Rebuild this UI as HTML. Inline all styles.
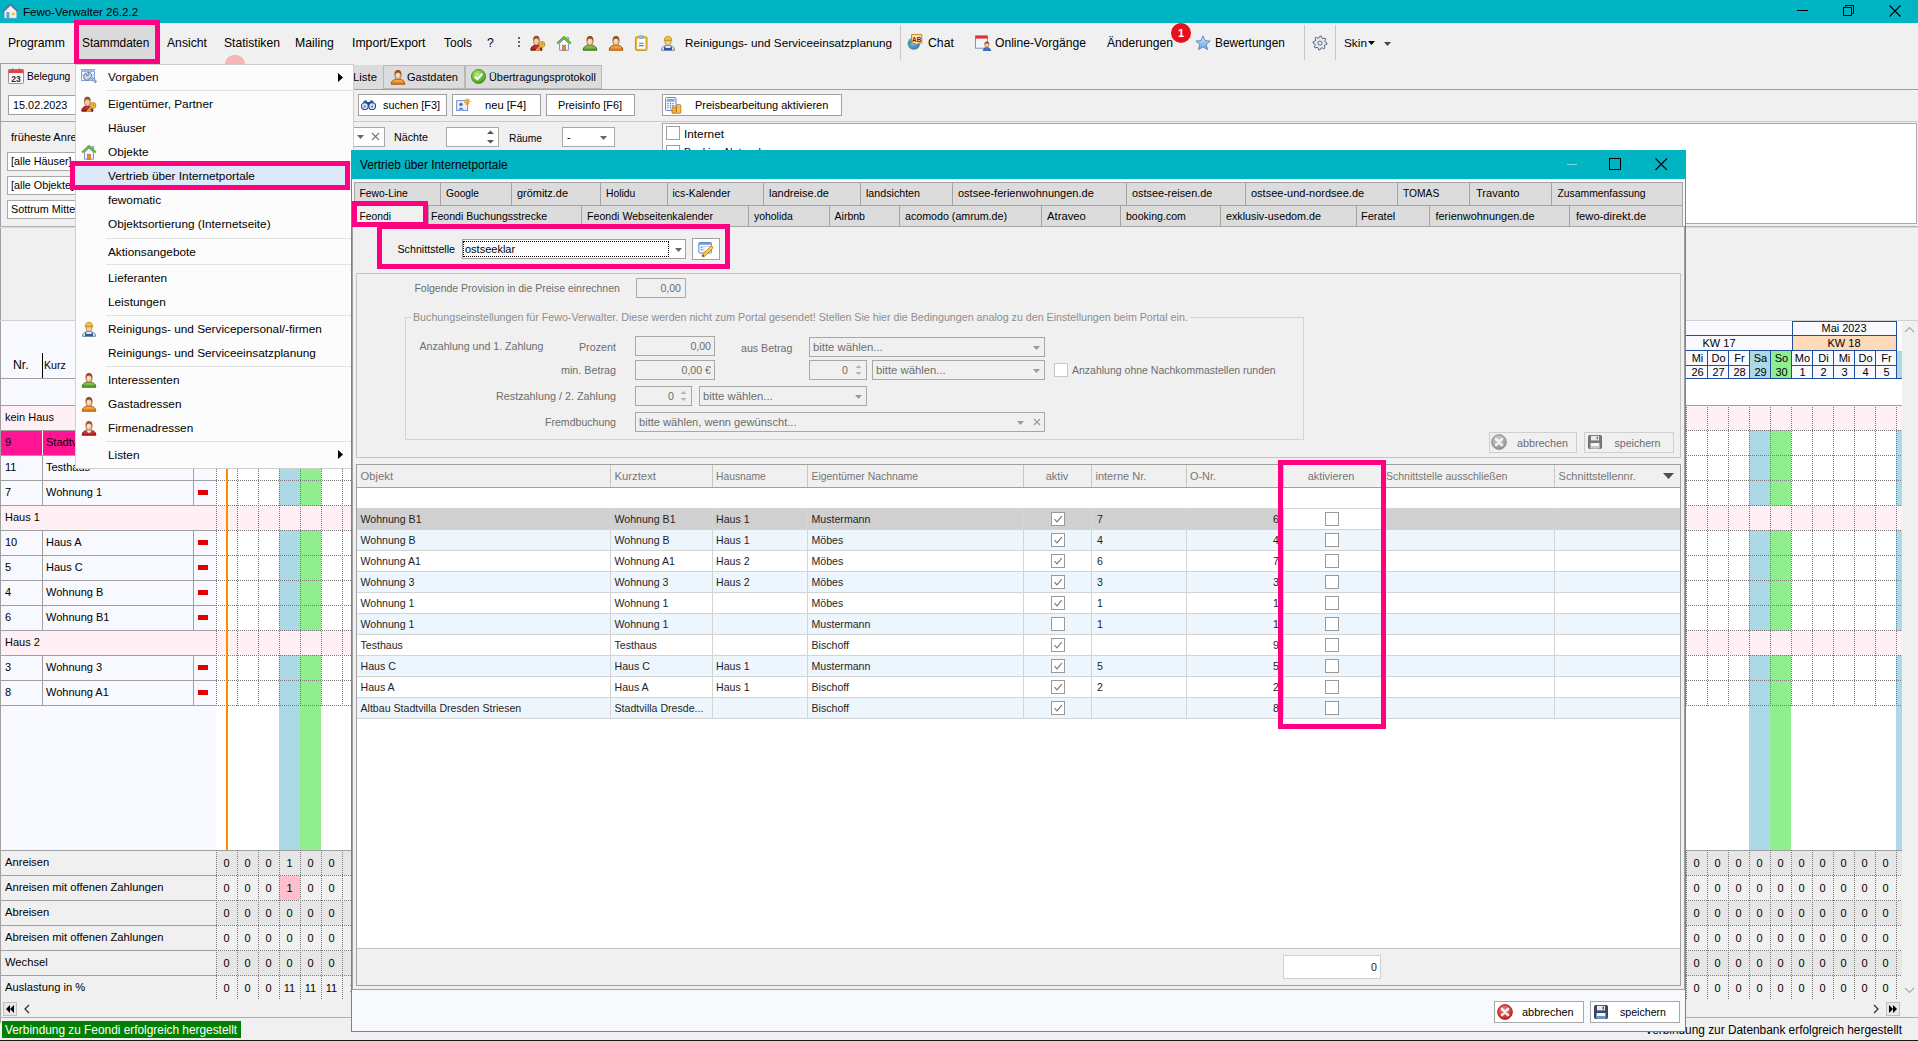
<!DOCTYPE html>
<html><head><meta charset="utf-8"><title>Fewo-Verwalter</title>
<style>
html,body{margin:0;padding:0;}
body{width:1918px;height:1041px;overflow:hidden;position:relative;background:#f0f0f0;font-family:"Liberation Sans",sans-serif;}
body>div,body>svg{position:absolute;}
</style></head><body>
<div style="left:0px;top:0px;width:1918px;height:1041px;background:#f0f0f0;"></div>
<div style="left:0px;top:0px;width:1918px;height:23px;background:#00b4c3;"></div>
<svg style="left:2px;top:3px" width="17" height="16" viewBox="0 0 17 16"><path d="M2.6 8 L8.5 2.6 L14.4 8 V15 H2.6Z" fill="#f2f2f2" stroke="#c0c0c0" stroke-width="0.6"/><path d="M0.8 8.6 L8.5 1.4 L16.2 8.6" fill="none" stroke="#5a6ea0" stroke-width="1.8" stroke-linejoin="round"/><rect x="4.4" y="9" width="3" height="6" fill="#6a9ad8"/><rect x="9.8" y="9.6" width="2.8" height="2.6" fill="#f0c030"/></svg>
<div style="top:4px;font-size:11.5px;line-height:16px;color:#000;white-space:nowrap;left:23px;">Fewo-Verwalter 26.2.2</div>
<div style="left:1797px;top:10px;width:11px;height:1px;background:#000;"></div>
<svg style="left:1843px;top:5px" width="12" height="12" viewBox="0 0 12 12"><rect x="0.5" y="2.5" width="8" height="8" fill="none" stroke="#000"/><path d="M2.5 2.5 V0.5 H10.5 V8.5 H8.5" fill="none" stroke="#000"/></svg>
<svg style="left:1889px;top:5px" width="12" height="12" viewBox="0 0 12 12"><path d="M0.5 0.5 L11.5 11.5 M11.5 0.5 L0.5 11.5" stroke="#000" stroke-width="1.1"/></svg>
<div style="left:79px;top:25px;width:76px;height:34px;background:#dadada;"></div>
<div style="top:35px;font-size:12.1875px;line-height:16px;color:#000;white-space:nowrap;left:8px;">Programm</div>
<div style="top:35px;font-size:11.875px;line-height:16px;color:#000;white-space:nowrap;left:82px;">Stammdaten</div>
<div style="top:35px;font-size:12.1875px;line-height:16px;color:#000;white-space:nowrap;left:167px;">Ansicht</div>
<div style="top:35px;font-size:12.125px;line-height:16px;color:#000;white-space:nowrap;left:224px;">Statistiken</div>
<div style="top:35px;font-size:12.25px;line-height:16px;color:#000;white-space:nowrap;left:295px;">Mailing</div>
<div style="top:35px;font-size:12.25px;line-height:16px;color:#000;white-space:nowrap;left:352px;">Import/Export</div>
<div style="top:35px;font-size:12.0px;line-height:16px;color:#000;white-space:nowrap;left:444px;">Tools</div>
<div style="top:35px;font-size:12.25px;line-height:16px;color:#000;white-space:nowrap;left:487px;">?</div>
<div style="left:518px;top:37px;width:2px;height:2px;background:#666"></div><div style="left:518px;top:41px;width:2px;height:2px;background:#666"></div><div style="left:518px;top:45px;width:2px;height:2px;background:#666"></div>
<svg style="left:530px;top:35px" width="16" height="16" viewBox="0 0 16 16"><defs><linearGradient id="g1" x1="0" y1="0" x2="0" y2="1"><stop offset="0" stop-color="#d84040"/><stop offset="1" stop-color="#a01818"/></linearGradient></defs><path d="M0.8 15.2 C0.8 11.6 3 10.2 6.4 10.2 C9.8 10.2 12 11.6 12 15.2 Z" fill="url(#g1)" stroke="#6a0c0c" stroke-width="0.9"/><ellipse cx="6.4" cy="6.4" rx="2.9" ry="3.7" fill="#f3c9a0" stroke="#a0602e" stroke-width="0.7"/><path d="M3.2 6.2 C2.8 2.4 4.4 0.8 6.4 0.8 C8.4 0.8 10 2.4 9.6 6.2 C9 4.4 8.2 3.2 6.4 3.2 C4.6 3.2 3.8 4.4 3.2 6.2Z" fill="#8e4e22"/><circle cx="12" cy="9.4" r="2.9" fill="#f2c050" stroke="#b07818" stroke-width="0.8"/><circle cx="12.3" cy="9.1" r="0.9" fill="#b07818"/><path d="M10.2 11.4 L6.6 15.2 M8 13.8 L9.2 15" stroke="#e0a438" stroke-width="1.9" stroke-linecap="round"/></svg>
<svg style="left:556px;top:35px" width="16" height="16" viewBox="0 0 16 16"><path d="M3.6 8.2 V15.2 H12.4 V8.2 L8 4Z" fill="#f6f9ff" stroke="#6a7ed0" stroke-width="0.9"/><path d="M11 4.6 V2.4 H12.6 V6.2" fill="#f6f9ff" stroke="#6a7ed0" stroke-width="0.8"/><path d="M1.2 8.6 L8 2 L14.8 8.6" fill="none" stroke="#62b030" stroke-width="2.1" stroke-linejoin="round"/><rect x="6.5" y="10.2" width="3" height="5" fill="#e89030" stroke="#b06010" stroke-width="0.6"/></svg>
<svg style="left:582px;top:35px" width="16" height="16" viewBox="0 0 16 16"><defs><linearGradient id="g2" x1="0" y1="0" x2="0" y2="1"><stop offset="0" stop-color="#9ad860"/><stop offset="1" stop-color="#4a9a20"/></linearGradient><radialGradient id="g2f" cx="0.45" cy="0.45" r="0.6"><stop offset="0" stop-color="#fff2e0"/><stop offset="1" stop-color="#e0a070"/></radialGradient></defs><path d="M1.2 15.2 C1.2 11.6 4 10.2 8 10.2 C12 10.2 14.8 11.6 14.8 15.2 Z" fill="url(#g2)" stroke="#2f6a10" stroke-width="0.9"/><ellipse cx="8" cy="6.6" rx="3.1" ry="3.9" fill="url(#g2f)" stroke="#a0602e" stroke-width="0.7"/><path d="M4.6 6.4 C4.2 2.6 5.8 1 8 1 C10.2 1 11.8 2.6 11.4 6.4 C10.8 4.6 10 3.4 8 3.4 C6 3.4 5.2 4.6 4.6 6.4Z" fill="#8e4e22"/></svg>
<svg style="left:608px;top:35px" width="16" height="16" viewBox="0 0 16 16"><defs><linearGradient id="g3" x1="0" y1="0" x2="0" y2="1"><stop offset="0" stop-color="#ffb850"/><stop offset="1" stop-color="#e07810"/></linearGradient><radialGradient id="g3f" cx="0.45" cy="0.45" r="0.6"><stop offset="0" stop-color="#fff2e0"/><stop offset="1" stop-color="#e0a070"/></radialGradient></defs><path d="M1.2 15.2 C1.2 11.6 4 10.2 8 10.2 C12 10.2 14.8 11.6 14.8 15.2 Z" fill="url(#g3)" stroke="#a05008" stroke-width="0.9"/><ellipse cx="8" cy="6.6" rx="3.1" ry="3.9" fill="url(#g3f)" stroke="#a0602e" stroke-width="0.7"/><path d="M4.6 6.4 C4.2 2.6 5.8 1 8 1 C10.2 1 11.8 2.6 11.4 6.4 C10.8 4.6 10 3.4 8 3.4 C6 3.4 5.2 4.6 4.6 6.4Z" fill="#8e4e22"/></svg>
<svg style="left:634px;top:35px" width="16" height="16" viewBox="0 0 16 16"><rect x="1.5" y="1.8" width="11.5" height="13.6" rx="1.2" fill="#f2c030" stroke="#b88a10" stroke-width="0.9"/><rect x="3.2" y="3.6" width="8.1" height="10.2" fill="#fbfdff"/><path d="M5 8.2 H9.6 M5 10.6 H9.6" stroke="#3e78d0" stroke-width="1.1"/><rect x="5" y="0.6" width="4.5" height="2.8" rx="0.8" fill="#8ac0f0" stroke="#5a90c8" stroke-width="0.5"/></svg>
<svg style="left:660px;top:35px" width="16" height="16" viewBox="0 0 16 16"><path d="M1.5 15.3 C1.5 11.8 4 10.4 8 10.4 C12 10.4 14.5 11.8 14.5 15.3 Z" fill="#dfe6f0" stroke="#56688a" stroke-width="0.8"/><path d="M4 15.3 V11.4 H5.4 V13 H10.6 V11.4 H12 V15.3Z" fill="#2c58b0"/><ellipse cx="8" cy="6.8" rx="3" ry="3.6" fill="#f4cfa4" stroke="#a0602e" stroke-width="0.6"/><path d="M4.3 5.6 C4.3 2.2 6 1.2 8 1.2 C10 1.2 11.7 2.2 11.7 5.6 Z" fill="#f0c040" stroke="#a07a10" stroke-width="0.6"/><rect x="4" y="4.8" width="8" height="1.4" fill="#c89a20"/></svg>
<div style="top:35px;font-size:11.75px;line-height:16px;color:#000;white-space:nowrap;left:685px;">Reinigungs- und Serviceeinsatzplanung</div>
<div style="left:900px;top:25px;width:1px;height:35px;background:#c8c8c8;"></div>
<svg style="left:907px;top:34px" width="16" height="16" viewBox="0 0 16 16"><defs><radialGradient id="g5" cx="0.4" cy="0.4" r="0.7"><stop offset="0" stop-color="#7ac8f8"/><stop offset="1" stop-color="#2a68b8"/></radialGradient></defs><circle cx="6.8" cy="9.6" r="6.2" fill="url(#g5)"/><path d="M1.4 7.6 Q3.4 6 4.6 8.2 Q3.8 11 1.4 11.2Z M7.5 13.2 Q9.5 12 10.8 14.4 Q8.5 16 7.5 13.2Z" fill="#5aa030"/><path d="M4.6 0.6 H14.8 V9.2 H11 L9.6 11 L8.2 9.2 H4.6Z" fill="#fde6b0" stroke="#d08018" stroke-width="1"/><text x="9.7" y="7.6" font-size="6.4" font-weight="bold" text-anchor="middle" fill="#7a1a0a" font-family="Liberation Sans">AB</text></svg>
<div style="top:35px;font-size:12.25px;line-height:16px;color:#000;white-space:nowrap;left:928px;">Chat</div>
<svg style="left:975px;top:35px" width="16" height="16" viewBox="0 0 16 16"><rect x="0.5" y="0.8" width="12" height="12.4" fill="#f4f6fa" stroke="#7a8ca8" stroke-width="0.9"/><rect x="0.5" y="0.8" width="12" height="2.8" fill="#e03030"/><path d="M8.2 16 C8.2 13.4 9.6 12.6 11.8 12.6 C14 12.6 15.6 13.4 15.6 16Z" fill="#3a7ad0" stroke="#1e4a98" stroke-width="0.6"/><ellipse cx="11.8" cy="9.6" rx="2.2" ry="2.6" fill="#f6d0a0" stroke="#8a4a1a" stroke-width="0.5"/><path d="M9.6 9.6 C9.4 7 10.6 6.4 11.8 6.4 C13 6.4 14.2 7 14 9.6 C13.4 8.2 10.2 8.2 9.6 9.6Z" fill="#8a4a1a"/></svg>
<div style="top:35px;font-size:12.125px;line-height:16px;color:#000;white-space:nowrap;left:995px;">Online-Vorgänge</div>
<div style="top:35px;font-size:12.125px;line-height:16px;color:#000;white-space:nowrap;left:1107px;">Änderungen</div>
<div style="left:1171px;top:23px;width:20px;height:20px;border-radius:10px;background:#e8101a;color:#fff;font-size:11px;font-weight:bold;line-height:20px;text-align:center">1</div>
<svg style="left:1195px;top:35px" width="16" height="16" viewBox="0 0 16 16"><defs><linearGradient id="g6" x1="0" y1="0" x2="0" y2="1"><stop offset="0" stop-color="#cfe6fc"/><stop offset="1" stop-color="#6aa2e0"/></linearGradient></defs><path d="M8 0.9 L10.1 5.6 L15.2 6.1 L11.3 9.5 L12.5 14.6 L8 11.9 L3.5 14.6 L4.7 9.5 L0.8 6.1 L5.9 5.6Z" fill="url(#g6)" stroke="#4a7ab8" stroke-width="0.8" stroke-linejoin="round"/></svg>
<div style="top:35px;font-size:11.875px;line-height:16px;color:#000;white-space:nowrap;left:1215px;">Bewertungen</div>
<div style="left:1304px;top:25px;width:1px;height:35px;background:#c8c8c8;"></div>
<svg style="left:1312px;top:35px" width="16" height="16" viewBox="0 0 16 16"><polygon points="8.00,1.00 9.37,1.13 9.99,3.20 10.89,3.68 12.95,3.05 13.82,4.11 12.80,6.01 13.10,6.99 15.00,8.00 14.87,9.37 12.80,9.99 12.32,10.89 12.95,12.95 11.89,13.82 9.99,12.80 9.01,13.10 8.00,15.00 6.63,14.87 6.01,12.80 5.11,12.32 3.05,12.95 2.18,11.89 3.20,9.99 2.90,9.01 1.00,8.00 1.13,6.63 3.20,6.01 3.68,5.11 3.05,3.05 4.11,2.18 6.01,3.20 6.99,2.90" fill="#e4e8f0" stroke="#5a6888" stroke-width="1"/><circle cx="8" cy="8" r="2" fill="#f4f6fa" stroke="#5a6888" stroke-width="1"/></svg>
<div style="left:1335px;top:25px;width:1px;height:35px;background:#c8c8c8;"></div>
<div style="top:35px;font-size:11.8125px;line-height:16px;color:#000;white-space:nowrap;left:1344px;">Skin</div>
<svg style="left:1368px;top:41px" width="7" height="4"><path d="M0 0 H7 L3.5 4Z" fill="#000"/></svg>
<svg style="left:1384px;top:42px" width="7" height="4"><path d="M0 0 H7 L3.5 4Z" fill="#444"/></svg>
<div style="left:0px;top:63px;width:75px;height:1px;background:#a0a0a0;"></div>
<div style="left:0px;top:63px;width:1px;height:960px;background:#a0a0a0;"></div>
<div style="left:351px;top:89px;width:1567px;height:1px;background:#a0a0a0;"></div>
<div style="left:351px;top:65px;width:32px;height:24px;background:#dcdcdc;"></div>
<div style="left:383px;top:65px;width:82px;height:24px;background:#dcdcdc;border:1px solid #b8b8b8;box-sizing:border-box;"></div>
<div style="left:465px;top:65px;width:137px;height:24px;background:#dcdcdc;border:1px solid #b8b8b8;box-sizing:border-box;"></div>
<div style="top:69px;font-size:11.375px;line-height:16px;color:#000;white-space:nowrap;left:353px;">Liste</div>
<svg style="left:390px;top:69px" width="16" height="16" viewBox="0 0 16 16"><defs><linearGradient id="g7" x1="0" y1="0" x2="0" y2="1"><stop offset="0" stop-color="#ffb850"/><stop offset="1" stop-color="#e07810"/></linearGradient><radialGradient id="g7f" cx="0.45" cy="0.45" r="0.6"><stop offset="0" stop-color="#fff2e0"/><stop offset="1" stop-color="#e0a070"/></radialGradient></defs><path d="M1.2 15.2 C1.2 11.6 4 10.2 8 10.2 C12 10.2 14.8 11.6 14.8 15.2 Z" fill="url(#g7)" stroke="#a05008" stroke-width="0.9"/><ellipse cx="8" cy="6.6" rx="3.1" ry="3.9" fill="url(#g7f)" stroke="#a0602e" stroke-width="0.7"/><path d="M4.6 6.4 C4.2 2.6 5.8 1 8 1 C10.2 1 11.8 2.6 11.4 6.4 C10.8 4.6 10 3.4 8 3.4 C6 3.4 5.2 4.6 4.6 6.4Z" fill="#8e4e22"/></svg>
<div style="top:69px;font-size:11.0625px;line-height:16px;color:#000;white-space:nowrap;left:407px;">Gastdaten</div>
<svg style="left:471px;top:69px" width="15" height="15" viewBox="0 0 15 15"><defs><radialGradient id="g8" cx="0.4" cy="0.35" r="0.7"><stop offset="0" stop-color="#b8f080"/><stop offset="1" stop-color="#3a9a10"/></radialGradient></defs><circle cx="7.5" cy="7.5" r="7" fill="url(#g8)" stroke="#3a8010" stroke-width="0.8"/><path d="M3.8 7.6 L6.4 10.2 L11.4 4.6" fill="none" stroke="#fff" stroke-width="1.9"/></svg>
<div style="top:69px;font-size:10.875px;line-height:16px;color:#000;white-space:nowrap;left:489px;">Übertragungsprotokoll</div>
<svg style="left:8px;top:68px" width="16" height="16" viewBox="0 0 16 16"><rect x="0.5" y="1.5" width="15" height="14" rx="0.8" fill="#fafafa" stroke="#8a8a8a" stroke-width="0.9"/><rect x="0.5" y="1.5" width="15" height="3.6" fill="#e04848"/><path d="M4.5 0.4 V3 M11.5 0.4 V3" stroke="#707070" stroke-width="1"/><text x="8" y="14" font-size="8.6" font-weight="bold" text-anchor="middle" fill="#2a2a2a" font-family="Liberation Sans">23</text></svg>
<div style="top:69px;font-size:10.25px;line-height:16px;color:#000;white-space:nowrap;left:27px;">Belegung</div>
<div style="left:8px;top:95px;width:80px;height:20px;background:#fff;border:1px solid #a0a0a0;box-sizing:border-box;"></div>
<div style="top:97px;font-size:10.875px;line-height:16px;color:#000;white-space:nowrap;left:13px;">15.02.2023</div>
<div style="left:0px;top:121px;width:75px;height:1px;background:#a8a8a8;"></div>
<div style="left:358px;top:94px;width:89px;height:22px;background:#fff;border:1px solid #a0a0a0;box-sizing:border-box;"></div>
<div style="top:97px;font-size:10.9375px;line-height:16px;color:#000;white-space:nowrap;left:383px;">suchen [F3]</div>
<div style="left:452px;top:94px;width:89px;height:22px;background:#fff;border:1px solid #a0a0a0;box-sizing:border-box;"></div>
<div style="top:97px;font-size:11.1875px;line-height:16px;color:#000;white-space:nowrap;left:485px;">neu [F4]</div>
<div style="left:546px;top:94px;width:89px;height:22px;background:#fff;border:1px solid #a0a0a0;box-sizing:border-box;"></div>
<div style="top:97px;font-size:10.875px;line-height:16px;color:#000;white-space:nowrap;left:558px;">Preisinfo [F6]</div>
<div style="left:662px;top:94px;width:180px;height:22px;background:#fff;border:1px solid #a0a0a0;box-sizing:border-box;"></div>
<div style="top:97px;font-size:11.0px;line-height:16px;color:#000;white-space:nowrap;left:695px;">Preisbearbeitung aktivieren</div>
<svg style="left:361px;top:99px" width="15" height="11" viewBox="0 0 15 11"><path d="M1 7 L3 1.5 H6 V7Z M14 7 L12 1.5 H9 V7Z" fill="#3a5aa0"/><rect x="6" y="3" width="3" height="4" fill="#283e78"/><circle cx="3.8" cy="7.2" r="3.4" fill="#d8e4f4" stroke="#2a4a88" stroke-width="1.1"/><circle cx="11.2" cy="7.2" r="3.4" fill="#d8e4f4" stroke="#2a4a88" stroke-width="1.1"/><circle cx="3.8" cy="7.4" r="1" fill="#3a6ac8"/><circle cx="11.2" cy="7.4" r="1" fill="#3a6ac8"/></svg>
<svg style="left:456px;top:98px" width="15" height="13" viewBox="0 0 15 13"><rect x="0.6" y="2.6" width="11" height="10" fill="#e6eefa" stroke="#6a8ad0" stroke-width="0.9"/><circle cx="5" cy="6.4" r="1.7" fill="#4a6aa0"/><path d="M2.2 11.6 Q5 8 7.8 11.6Z" fill="#4a6aa0"/><path d="M11 0.2 L11.6 2 L13.4 1.2 L12.6 3 L14.2 3.8 L12.4 4.4 L13 6.2 L11.2 5.2 L10.2 6.8 L10 4.8 L8.2 4.4 L9.8 3.4 L9 1.6 L10.8 2.2Z" fill="#f8b020" stroke="#e07010" stroke-width="0.4"/></svg>
<svg style="left:665px;top:97px" width="17" height="17" viewBox="0 0 17 17"><rect x="0.5" y="0.5" width="10.5" height="13" rx="1" fill="#eef4fc" stroke="#5a7ac0" stroke-width="0.9"/><rect x="2" y="2" width="7.5" height="2.6" fill="#7aa8e0"/><path d="M2.5 6.5 h1 M5 6.5 h1 M7.5 6.5 h1 M2.5 8.6 h1 M5 8.6 h1 M7.5 8.6 h1 M2.5 10.7 h1 M5 10.7 h1" stroke="#4a6ab0" stroke-width="1.1"/><path d="M7.5 8.6 h1" stroke="#e03030" stroke-width="1.1"/><rect x="7" y="10" width="4.4" height="6.4" rx="1.2" fill="#f0b040" stroke="#a86010" stroke-width="0.7"/><rect x="11.4" y="7.6" width="4.4" height="8.8" rx="1.2" fill="#f6c050" stroke="#a86010" stroke-width="0.7"/></svg>
<div style="left:351px;top:121px;width:1567px;height:1px;background:#c8c8c8;"></div>
<div style="left:351px;top:127px;width:34px;height:20px;background:#fff;border:1px solid #a8a8a8;box-sizing:border-box;"></div>
<svg style="left:357px;top:135px" width="7" height="4"><path d="M0 0 H7 L3.5 4Z" fill="#666"/></svg>
<svg style="left:371px;top:132px" width="9" height="9" viewBox="0 0 9 9"><path d="M1 1 L8 8 M8 1 L1 8" stroke="#777" stroke-width="1.1"/></svg>
<div style="top:129px;font-size:10.75px;line-height:16px;color:#000;white-space:nowrap;left:394px;">Nächte</div>
<div style="left:446px;top:127px;width:53px;height:20px;background:#fff;border:1px solid #a8a8a8;box-sizing:border-box;"></div>
<svg style="left:487px;top:130px" width="7" height="14"><path d="M0 4 L3.5 0.5 L7 4Z M0 10 L3.5 13.5 L7 10Z" fill="#555"/></svg>
<div style="top:131px;font-size:10.25px;line-height:16px;color:#000;white-space:nowrap;left:509px;">Räume</div>
<div style="left:562px;top:127px;width:53px;height:20px;background:#fff;border:1px solid #a8a8a8;box-sizing:border-box;"></div>
<div style="top:129px;font-size:11px;line-height:16px;color:#000;white-space:nowrap;left:567px;">-</div>
<svg style="left:600px;top:136px" width="7" height="4"><path d="M0 0 H7 L3.5 4Z" fill="#666"/></svg>
<div style="left:662px;top:123px;width:1255px;height:101px;background:#fff;border:1px solid #a8a8a8;box-sizing:border-box;"></div>
<div style="left:666px;top:126px;width:14px;height:14px;background:#fff;border:1px solid #a0a0a0;box-sizing:border-box;"></div>
<div style="top:126px;font-size:11.8125px;line-height:16px;color:#000;white-space:nowrap;left:684px;">Internet</div>
<div style="left:666px;top:145px;width:14px;height:14px;background:#fff;border:1px solid #a0a0a0;box-sizing:border-box;"></div>
<div style="top:144px;font-size:10.5625px;line-height:16px;color:#000;white-space:nowrap;left:684px;">Booking Network</div>
<div style="left:0px;top:226px;width:1918px;height:1px;background:#b4b4b4;"></div>
<div style="left:0px;top:227px;width:1918px;height:1px;background:#d8d8d8;"></div>
<div style="top:129px;font-size:11.0625px;line-height:16px;color:#000;white-space:nowrap;left:11px;">früheste Anreise</div>
<div style="left:7px;top:152px;width:80px;height:19px;background:#fff;border:1px solid #a8a8a8;box-sizing:border-box;"></div>
<div style="top:153px;font-size:10.8px;line-height:16px;color:#000;white-space:nowrap;left:11px;">[alle Häuser]</div>
<div style="left:7px;top:176px;width:80px;height:19px;background:#fff;border:1px solid #a8a8a8;box-sizing:border-box;"></div>
<div style="top:177px;font-size:10.8px;line-height:16px;color:#000;white-space:nowrap;left:11px;">[alle Objekte]</div>
<div style="left:7px;top:200px;width:80px;height:19px;background:#fff;border:1px solid #a8a8a8;box-sizing:border-box;"></div>
<div style="top:201px;font-size:10.8px;line-height:16px;color:#000;white-space:nowrap;left:11px;">Sottrum Mitte</div>
<div style="left:0px;top:320px;width:1918px;height:1px;background:#d0d0d0;"></div>
<div style="left:1px;top:321px;width:1901px;height:84px;background:#f8faff;"></div>
<div style="left:216px;top:379px;width:1686px;height:26px;background:#fff;"></div>
<div style="left:0px;top:321px;width:216px;height:84px;background:#f7f9fe;"></div>
<div style="left:0px;top:378px;width:216px;height:1px;background:#a0a0a0;"></div>
<div style="top:357px;font-size:12.25px;line-height:16px;color:#000;white-space:nowrap;left:13px;">Nr.</div>
<div style="top:357px;font-size:10.6875px;line-height:16px;color:#000;white-space:nowrap;left:44px;">Kurz</div>
<div style="left:42px;top:353px;width:1px;height:25px;background:#000;"></div>
<div style="left:1686px;top:335px;width:211px;height:1px;background:#1f4e9e;"></div>
<div style="left:1686px;top:350px;width:211px;height:1px;background:#1f4e9e;"></div>
<div style="left:1686px;top:365px;width:211px;height:1px;background:#1f4e9e;"></div>
<div style="left:1686px;top:378px;width:216px;height:1px;background:#1f4e9e;"></div>
<div style="left:1792px;top:321px;width:105px;height:1px;background:#1f4e9e;"></div>
<div style="left:1792px;top:321px;width:1px;height:29px;background:#1f4e9e;"></div>
<div style="left:1896px;top:321px;width:1px;height:57px;background:#1f4e9e;"></div>
<div style="left:1793px;top:336px;width:103px;height:14px;background:#ffdab9;"></div>
<div style="top:320px;font-size:10.9375px;line-height:16px;color:#000;white-space:nowrap;left:1644px;width:400px;text-align:center;">Mai 2023</div>
<div style="top:335px;font-size:11px;line-height:16px;color:#000;white-space:nowrap;left:1519px;width:400px;text-align:center;">KW 17</div>
<div style="top:335px;font-size:11px;line-height:16px;color:#000;white-space:nowrap;left:1644px;width:400px;text-align:center;">KW 18</div>
<div style="left:1707px;top:350px;width:1px;height:28px;background:#1f4e9e;"></div>
<div style="top:350px;font-size:11px;line-height:16px;color:#000;white-space:nowrap;left:1497.5px;width:400px;text-align:center;">Mi</div>
<div style="top:364px;font-size:11px;line-height:16px;color:#000;white-space:nowrap;left:1497.5px;width:400px;text-align:center;">26</div>
<div style="left:1728px;top:350px;width:1px;height:28px;background:#1f4e9e;"></div>
<div style="top:350px;font-size:11px;line-height:16px;color:#000;white-space:nowrap;left:1518.5px;width:400px;text-align:center;">Do</div>
<div style="top:364px;font-size:11px;line-height:16px;color:#000;white-space:nowrap;left:1518.5px;width:400px;text-align:center;">27</div>
<div style="left:1749px;top:350px;width:1px;height:28px;background:#1f4e9e;"></div>
<div style="top:350px;font-size:11px;line-height:16px;color:#000;white-space:nowrap;left:1539.5px;width:400px;text-align:center;">Fr</div>
<div style="top:364px;font-size:11px;line-height:16px;color:#000;white-space:nowrap;left:1539.5px;width:400px;text-align:center;">28</div>
<div style="left:1750px;top:351px;width:21px;height:27px;background:#add8e6;"></div>
<div style="left:1770px;top:350px;width:1px;height:28px;background:#1f4e9e;"></div>
<div style="top:350px;font-size:11px;line-height:16px;color:#000;white-space:nowrap;left:1560.5px;width:400px;text-align:center;">Sa</div>
<div style="top:364px;font-size:11px;line-height:16px;color:#000;white-space:nowrap;left:1560.5px;width:400px;text-align:center;">29</div>
<div style="left:1771px;top:351px;width:21px;height:27px;background:#90ee90;"></div>
<div style="left:1791px;top:350px;width:1px;height:28px;background:#1f4e9e;"></div>
<div style="top:350px;font-size:11px;line-height:16px;color:#000;white-space:nowrap;left:1581.5px;width:400px;text-align:center;">So</div>
<div style="top:364px;font-size:11px;line-height:16px;color:#000;white-space:nowrap;left:1581.5px;width:400px;text-align:center;">30</div>
<div style="left:1812px;top:350px;width:1px;height:28px;background:#1f4e9e;"></div>
<div style="top:350px;font-size:11px;line-height:16px;color:#000;white-space:nowrap;left:1602.5px;width:400px;text-align:center;">Mo</div>
<div style="top:364px;font-size:11px;line-height:16px;color:#000;white-space:nowrap;left:1602.5px;width:400px;text-align:center;">1</div>
<div style="left:1833px;top:350px;width:1px;height:28px;background:#1f4e9e;"></div>
<div style="top:350px;font-size:11px;line-height:16px;color:#000;white-space:nowrap;left:1623.5px;width:400px;text-align:center;">Di</div>
<div style="top:364px;font-size:11px;line-height:16px;color:#000;white-space:nowrap;left:1623.5px;width:400px;text-align:center;">2</div>
<div style="left:1854px;top:350px;width:1px;height:28px;background:#1f4e9e;"></div>
<div style="top:350px;font-size:11px;line-height:16px;color:#000;white-space:nowrap;left:1644.5px;width:400px;text-align:center;">Mi</div>
<div style="top:364px;font-size:11px;line-height:16px;color:#000;white-space:nowrap;left:1644.5px;width:400px;text-align:center;">3</div>
<div style="left:1875px;top:350px;width:1px;height:28px;background:#1f4e9e;"></div>
<div style="top:350px;font-size:11px;line-height:16px;color:#000;white-space:nowrap;left:1665.5px;width:400px;text-align:center;">Do</div>
<div style="top:364px;font-size:11px;line-height:16px;color:#000;white-space:nowrap;left:1665.5px;width:400px;text-align:center;">4</div>
<div style="left:1896px;top:350px;width:1px;height:28px;background:#1f4e9e;"></div>
<div style="top:350px;font-size:11px;line-height:16px;color:#000;white-space:nowrap;left:1686.5px;width:400px;text-align:center;">Fr</div>
<div style="top:364px;font-size:11px;line-height:16px;color:#000;white-space:nowrap;left:1686.5px;width:400px;text-align:center;">5</div>
<div style="left:1897px;top:351px;width:5px;height:27px;background:#add8e6;"></div>
<div style="left:216px;top:405px;width:1686px;height:445px;background:#fff;"></div>
<div style="left:279px;top:405px;width:21px;height:445px;background:#add8e6;"></div>
<div style="left:300px;top:405px;width:21px;height:445px;background:#90ee90;"></div>
<div style="left:426px;top:405px;width:21px;height:445px;background:#add8e6;"></div>
<div style="left:447px;top:405px;width:21px;height:445px;background:#90ee90;"></div>
<div style="left:573px;top:405px;width:21px;height:445px;background:#add8e6;"></div>
<div style="left:594px;top:405px;width:21px;height:445px;background:#90ee90;"></div>
<div style="left:720px;top:405px;width:21px;height:445px;background:#add8e6;"></div>
<div style="left:741px;top:405px;width:21px;height:445px;background:#90ee90;"></div>
<div style="left:867px;top:405px;width:21px;height:445px;background:#add8e6;"></div>
<div style="left:888px;top:405px;width:21px;height:445px;background:#90ee90;"></div>
<div style="left:1014px;top:405px;width:21px;height:445px;background:#add8e6;"></div>
<div style="left:1035px;top:405px;width:21px;height:445px;background:#90ee90;"></div>
<div style="left:1161px;top:405px;width:21px;height:445px;background:#add8e6;"></div>
<div style="left:1182px;top:405px;width:21px;height:445px;background:#90ee90;"></div>
<div style="left:1308px;top:405px;width:21px;height:445px;background:#add8e6;"></div>
<div style="left:1329px;top:405px;width:21px;height:445px;background:#90ee90;"></div>
<div style="left:1455px;top:405px;width:21px;height:445px;background:#add8e6;"></div>
<div style="left:1476px;top:405px;width:21px;height:445px;background:#90ee90;"></div>
<div style="left:1602px;top:405px;width:21px;height:445px;background:#add8e6;"></div>
<div style="left:1623px;top:405px;width:21px;height:445px;background:#90ee90;"></div>
<div style="left:1749px;top:405px;width:21px;height:445px;background:#add8e6;"></div>
<div style="left:1770px;top:405px;width:21px;height:445px;background:#90ee90;"></div>
<div style="left:1896px;top:405px;width:21px;height:445px;background:#add8e6;"></div>
<div style="left:1917px;top:405px;width:21px;height:445px;background:#90ee90;"></div>
<div style="left:0px;top:405px;width:216px;height:445px;background:#f7f9fe;"></div>
<div style="left:0px;top:406px;width:1902px;height:24px;background:#fff0f5;"></div>
<div style="top:409px;font-size:11px;line-height:16px;color:#000;white-space:nowrap;left:5px;">kein Haus</div>
<div style="left:0px;top:430px;width:216px;height:1px;background:#a0a0a0;"></div>
<div style="left:0px;top:431px;width:216px;height:24px;background:#ff1493;"></div>
<div style="left:42px;top:431px;width:1px;height:24px;background:#fff;"></div>
<div style="left:193px;top:430px;width:1px;height:25px;background:#a0a0a0;"></div>
<div style="top:434px;font-size:11px;line-height:16px;color:#000;white-space:nowrap;left:5px;">9</div>
<div style="top:434px;font-size:11px;line-height:16px;color:#000;white-space:nowrap;left:46px;">Stadtvilla</div>
<div style="left:0px;top:455px;width:216px;height:1px;background:#a0a0a0;"></div>
<div style="left:42px;top:455px;width:1px;height:25px;background:#a0a0a0;"></div>
<div style="left:193px;top:455px;width:1px;height:25px;background:#a0a0a0;"></div>
<div style="top:459px;font-size:11px;line-height:16px;color:#000;white-space:nowrap;left:5px;">11</div>
<div style="top:459px;font-size:11px;line-height:16px;color:#000;white-space:nowrap;left:46px;">Testhaus</div>
<svg style="left:195px;top:460px" width="17" height="9"><rect x="0.8" y="0.8" width="15.4" height="7.4" rx="2.5" fill="#fbeaea" stroke="#40a050" stroke-width="1.5"/><ellipse cx="12" cy="3.5" rx="2" ry="1.6" fill="#ff2000"/></svg>
<div style="left:0px;top:480px;width:216px;height:1px;background:#a0a0a0;"></div>
<div style="left:42px;top:480px;width:1px;height:25px;background:#a0a0a0;"></div>
<div style="left:193px;top:480px;width:1px;height:25px;background:#a0a0a0;"></div>
<div style="top:484px;font-size:11px;line-height:16px;color:#000;white-space:nowrap;left:5px;">7</div>
<div style="top:484px;font-size:11px;line-height:16px;color:#000;white-space:nowrap;left:46px;">Wohnung 1</div>
<div style="left:198px;top:490px;width:10px;height:5px;background:#e00000;"></div>
<div style="left:0px;top:505px;width:216px;height:1px;background:#a0a0a0;"></div>
<div style="left:0px;top:506px;width:1902px;height:24px;background:#fff0f5;"></div>
<div style="top:509px;font-size:11px;line-height:16px;color:#000;white-space:nowrap;left:5px;">Haus 1</div>
<div style="left:0px;top:530px;width:216px;height:1px;background:#a0a0a0;"></div>
<div style="left:42px;top:530px;width:1px;height:25px;background:#a0a0a0;"></div>
<div style="left:193px;top:530px;width:1px;height:25px;background:#a0a0a0;"></div>
<div style="top:534px;font-size:11px;line-height:16px;color:#000;white-space:nowrap;left:5px;">10</div>
<div style="top:534px;font-size:11px;line-height:16px;color:#000;white-space:nowrap;left:46px;">Haus A</div>
<div style="left:198px;top:540px;width:10px;height:5px;background:#e00000;"></div>
<div style="left:0px;top:555px;width:216px;height:1px;background:#a0a0a0;"></div>
<div style="left:42px;top:555px;width:1px;height:25px;background:#a0a0a0;"></div>
<div style="left:193px;top:555px;width:1px;height:25px;background:#a0a0a0;"></div>
<div style="top:559px;font-size:11px;line-height:16px;color:#000;white-space:nowrap;left:5px;">5</div>
<div style="top:559px;font-size:11px;line-height:16px;color:#000;white-space:nowrap;left:46px;">Haus C</div>
<div style="left:198px;top:565px;width:10px;height:5px;background:#e00000;"></div>
<div style="left:0px;top:580px;width:216px;height:1px;background:#a0a0a0;"></div>
<div style="left:42px;top:580px;width:1px;height:25px;background:#a0a0a0;"></div>
<div style="left:193px;top:580px;width:1px;height:25px;background:#a0a0a0;"></div>
<div style="top:584px;font-size:11px;line-height:16px;color:#000;white-space:nowrap;left:5px;">4</div>
<div style="top:584px;font-size:11px;line-height:16px;color:#000;white-space:nowrap;left:46px;">Wohnung B</div>
<div style="left:198px;top:590px;width:10px;height:5px;background:#e00000;"></div>
<div style="left:0px;top:605px;width:216px;height:1px;background:#a0a0a0;"></div>
<div style="left:42px;top:605px;width:1px;height:25px;background:#a0a0a0;"></div>
<div style="left:193px;top:605px;width:1px;height:25px;background:#a0a0a0;"></div>
<div style="top:609px;font-size:11px;line-height:16px;color:#000;white-space:nowrap;left:5px;">6</div>
<div style="top:609px;font-size:11px;line-height:16px;color:#000;white-space:nowrap;left:46px;">Wohnung B1</div>
<div style="left:198px;top:615px;width:10px;height:5px;background:#e00000;"></div>
<div style="left:0px;top:630px;width:216px;height:1px;background:#a0a0a0;"></div>
<div style="left:0px;top:631px;width:1902px;height:24px;background:#fff0f5;"></div>
<div style="top:634px;font-size:11px;line-height:16px;color:#000;white-space:nowrap;left:5px;">Haus 2</div>
<div style="left:0px;top:655px;width:216px;height:1px;background:#a0a0a0;"></div>
<div style="left:42px;top:655px;width:1px;height:25px;background:#a0a0a0;"></div>
<div style="left:193px;top:655px;width:1px;height:25px;background:#a0a0a0;"></div>
<div style="top:659px;font-size:11px;line-height:16px;color:#000;white-space:nowrap;left:5px;">3</div>
<div style="top:659px;font-size:11px;line-height:16px;color:#000;white-space:nowrap;left:46px;">Wohnung 3</div>
<div style="left:198px;top:665px;width:10px;height:5px;background:#e00000;"></div>
<div style="left:0px;top:680px;width:216px;height:1px;background:#a0a0a0;"></div>
<div style="left:42px;top:680px;width:1px;height:25px;background:#a0a0a0;"></div>
<div style="left:193px;top:680px;width:1px;height:25px;background:#a0a0a0;"></div>
<div style="top:684px;font-size:11px;line-height:16px;color:#000;white-space:nowrap;left:5px;">8</div>
<div style="top:684px;font-size:11px;line-height:16px;color:#000;white-space:nowrap;left:46px;">Wohnung A1</div>
<div style="left:198px;top:690px;width:10px;height:5px;background:#e00000;"></div>
<div style="left:0px;top:705px;width:216px;height:1px;background:#a0a0a0;"></div>
<svg style="left:216px;top:405px" width="1686" height="301"><defs><pattern id="pv" width="21" height="2" patternUnits="userSpaceOnUse"><rect x="0" y="0" width="1" height="1" fill="#7a7a7a"/></pattern><pattern id="ph" width="2" height="25" patternUnits="userSpaceOnUse"><rect x="0" y="0" width="1" height="1" fill="#7a7a7a"/></pattern></defs><rect x="0" y="0" width="1686" height="301" fill="url(#pv)"/><rect x="0" y="25" width="1686" height="276" fill="url(#ph)"/></svg>
<div style="left:0px;top:405px;width:1902px;height:1px;background:#a0a0a0;"></div>
<div style="left:226px;top:321px;width:2px;height:529px;background:#ff8c00;"></div>
<div style="left:0px;top:850px;width:1902px;height:1px;background:#a0a0a0;"></div>
<div style="left:216px;top:851px;width:1686px;height:24px;background:#e6e6e6;"></div>
<div style="left:0px;top:875px;width:216px;height:1px;background:#a0a0a0;"></div>
<div style="top:854px;font-size:11.2px;line-height:16px;color:#000;white-space:nowrap;left:5px;">Anreisen</div>
<div style="left:216px;top:876px;width:1686px;height:24px;background:#f0f0f0;"></div>
<div style="left:0px;top:900px;width:216px;height:1px;background:#a0a0a0;"></div>
<div style="top:879px;font-size:11.2px;line-height:16px;color:#000;white-space:nowrap;left:5px;">Anreisen mit offenen Zahlungen</div>
<div style="left:216px;top:901px;width:1686px;height:24px;background:#e6e6e6;"></div>
<div style="left:0px;top:925px;width:216px;height:1px;background:#a0a0a0;"></div>
<div style="top:904px;font-size:11.2px;line-height:16px;color:#000;white-space:nowrap;left:5px;">Abreisen</div>
<div style="left:216px;top:926px;width:1686px;height:24px;background:#f0f0f0;"></div>
<div style="left:0px;top:950px;width:216px;height:1px;background:#a0a0a0;"></div>
<div style="top:929px;font-size:11.2px;line-height:16px;color:#000;white-space:nowrap;left:5px;">Abreisen mit offenen Zahlungen</div>
<div style="left:216px;top:951px;width:1686px;height:24px;background:#e6e6e6;"></div>
<div style="left:0px;top:975px;width:216px;height:1px;background:#a0a0a0;"></div>
<div style="top:954px;font-size:11.2px;line-height:16px;color:#000;white-space:nowrap;left:5px;">Wechsel</div>
<div style="left:216px;top:976px;width:1686px;height:24px;background:#f0f0f0;"></div>
<div style="top:979px;font-size:11.2px;line-height:16px;color:#000;white-space:nowrap;left:5px;">Auslastung in %</div>
<div style="left:279px;top:876px;width:21px;height:24px;background:#ffc0cb;"></div>
<div style="top:855px;font-size:11px;line-height:16px;color:#000;white-space:nowrap;left:26.5px;width:400px;text-align:center;">0</div>
<div style="top:855px;font-size:11px;line-height:16px;color:#000;white-space:nowrap;left:47.5px;width:400px;text-align:center;">0</div>
<div style="top:855px;font-size:11px;line-height:16px;color:#000;white-space:nowrap;left:68.5px;width:400px;text-align:center;">0</div>
<div style="top:855px;font-size:11px;line-height:16px;color:#000;white-space:nowrap;left:89.5px;width:400px;text-align:center;">1</div>
<div style="top:855px;font-size:11px;line-height:16px;color:#000;white-space:nowrap;left:110.5px;width:400px;text-align:center;">0</div>
<div style="top:855px;font-size:11px;line-height:16px;color:#000;white-space:nowrap;left:131.5px;width:400px;text-align:center;">0</div>
<div style="top:880px;font-size:11px;line-height:16px;color:#000;white-space:nowrap;left:26.5px;width:400px;text-align:center;">0</div>
<div style="top:880px;font-size:11px;line-height:16px;color:#000;white-space:nowrap;left:47.5px;width:400px;text-align:center;">0</div>
<div style="top:880px;font-size:11px;line-height:16px;color:#000;white-space:nowrap;left:68.5px;width:400px;text-align:center;">0</div>
<div style="top:880px;font-size:11px;line-height:16px;color:#000;white-space:nowrap;left:89.5px;width:400px;text-align:center;">1</div>
<div style="top:880px;font-size:11px;line-height:16px;color:#000;white-space:nowrap;left:110.5px;width:400px;text-align:center;">0</div>
<div style="top:880px;font-size:11px;line-height:16px;color:#000;white-space:nowrap;left:131.5px;width:400px;text-align:center;">0</div>
<div style="top:905px;font-size:11px;line-height:16px;color:#000;white-space:nowrap;left:26.5px;width:400px;text-align:center;">0</div>
<div style="top:905px;font-size:11px;line-height:16px;color:#000;white-space:nowrap;left:47.5px;width:400px;text-align:center;">0</div>
<div style="top:905px;font-size:11px;line-height:16px;color:#000;white-space:nowrap;left:68.5px;width:400px;text-align:center;">0</div>
<div style="top:905px;font-size:11px;line-height:16px;color:#000;white-space:nowrap;left:89.5px;width:400px;text-align:center;">0</div>
<div style="top:905px;font-size:11px;line-height:16px;color:#000;white-space:nowrap;left:110.5px;width:400px;text-align:center;">0</div>
<div style="top:905px;font-size:11px;line-height:16px;color:#000;white-space:nowrap;left:131.5px;width:400px;text-align:center;">0</div>
<div style="top:930px;font-size:11px;line-height:16px;color:#000;white-space:nowrap;left:26.5px;width:400px;text-align:center;">0</div>
<div style="top:930px;font-size:11px;line-height:16px;color:#000;white-space:nowrap;left:47.5px;width:400px;text-align:center;">0</div>
<div style="top:930px;font-size:11px;line-height:16px;color:#000;white-space:nowrap;left:68.5px;width:400px;text-align:center;">0</div>
<div style="top:930px;font-size:11px;line-height:16px;color:#000;white-space:nowrap;left:89.5px;width:400px;text-align:center;">0</div>
<div style="top:930px;font-size:11px;line-height:16px;color:#000;white-space:nowrap;left:110.5px;width:400px;text-align:center;">0</div>
<div style="top:930px;font-size:11px;line-height:16px;color:#000;white-space:nowrap;left:131.5px;width:400px;text-align:center;">0</div>
<div style="top:955px;font-size:11px;line-height:16px;color:#000;white-space:nowrap;left:26.5px;width:400px;text-align:center;">0</div>
<div style="top:955px;font-size:11px;line-height:16px;color:#000;white-space:nowrap;left:47.5px;width:400px;text-align:center;">0</div>
<div style="top:955px;font-size:11px;line-height:16px;color:#000;white-space:nowrap;left:68.5px;width:400px;text-align:center;">0</div>
<div style="top:955px;font-size:11px;line-height:16px;color:#000;white-space:nowrap;left:89.5px;width:400px;text-align:center;">0</div>
<div style="top:955px;font-size:11px;line-height:16px;color:#000;white-space:nowrap;left:110.5px;width:400px;text-align:center;">0</div>
<div style="top:955px;font-size:11px;line-height:16px;color:#000;white-space:nowrap;left:131.5px;width:400px;text-align:center;">0</div>
<div style="top:980px;font-size:11px;line-height:16px;color:#000;white-space:nowrap;left:26.5px;width:400px;text-align:center;">0</div>
<div style="top:980px;font-size:11px;line-height:16px;color:#000;white-space:nowrap;left:47.5px;width:400px;text-align:center;">0</div>
<div style="top:980px;font-size:11px;line-height:16px;color:#000;white-space:nowrap;left:68.5px;width:400px;text-align:center;">0</div>
<div style="top:980px;font-size:11px;line-height:16px;color:#000;white-space:nowrap;left:89.5px;width:400px;text-align:center;">11</div>
<div style="top:980px;font-size:11px;line-height:16px;color:#000;white-space:nowrap;left:110.5px;width:400px;text-align:center;">11</div>
<div style="top:980px;font-size:11px;line-height:16px;color:#000;white-space:nowrap;left:131.5px;width:400px;text-align:center;">11</div>
<div style="top:980px;font-size:11px;line-height:16px;color:#000;white-space:nowrap;left:152.5px;width:400px;text-align:center;">1</div>
<div style="top:855px;font-size:11px;line-height:16px;color:#000;white-space:nowrap;left:1496.5px;width:400px;text-align:center;">0</div>
<div style="top:855px;font-size:11px;line-height:16px;color:#000;white-space:nowrap;left:1517.5px;width:400px;text-align:center;">0</div>
<div style="top:855px;font-size:11px;line-height:16px;color:#000;white-space:nowrap;left:1538.5px;width:400px;text-align:center;">0</div>
<div style="top:855px;font-size:11px;line-height:16px;color:#000;white-space:nowrap;left:1559.5px;width:400px;text-align:center;">0</div>
<div style="top:855px;font-size:11px;line-height:16px;color:#000;white-space:nowrap;left:1580.5px;width:400px;text-align:center;">0</div>
<div style="top:855px;font-size:11px;line-height:16px;color:#000;white-space:nowrap;left:1601.5px;width:400px;text-align:center;">0</div>
<div style="top:855px;font-size:11px;line-height:16px;color:#000;white-space:nowrap;left:1622.5px;width:400px;text-align:center;">0</div>
<div style="top:855px;font-size:11px;line-height:16px;color:#000;white-space:nowrap;left:1643.5px;width:400px;text-align:center;">0</div>
<div style="top:855px;font-size:11px;line-height:16px;color:#000;white-space:nowrap;left:1664.5px;width:400px;text-align:center;">0</div>
<div style="top:855px;font-size:11px;line-height:16px;color:#000;white-space:nowrap;left:1685.5px;width:400px;text-align:center;">0</div>
<div style="top:880px;font-size:11px;line-height:16px;color:#000;white-space:nowrap;left:1496.5px;width:400px;text-align:center;">0</div>
<div style="top:880px;font-size:11px;line-height:16px;color:#000;white-space:nowrap;left:1517.5px;width:400px;text-align:center;">0</div>
<div style="top:880px;font-size:11px;line-height:16px;color:#000;white-space:nowrap;left:1538.5px;width:400px;text-align:center;">0</div>
<div style="top:880px;font-size:11px;line-height:16px;color:#000;white-space:nowrap;left:1559.5px;width:400px;text-align:center;">0</div>
<div style="top:880px;font-size:11px;line-height:16px;color:#000;white-space:nowrap;left:1580.5px;width:400px;text-align:center;">0</div>
<div style="top:880px;font-size:11px;line-height:16px;color:#000;white-space:nowrap;left:1601.5px;width:400px;text-align:center;">0</div>
<div style="top:880px;font-size:11px;line-height:16px;color:#000;white-space:nowrap;left:1622.5px;width:400px;text-align:center;">0</div>
<div style="top:880px;font-size:11px;line-height:16px;color:#000;white-space:nowrap;left:1643.5px;width:400px;text-align:center;">0</div>
<div style="top:880px;font-size:11px;line-height:16px;color:#000;white-space:nowrap;left:1664.5px;width:400px;text-align:center;">0</div>
<div style="top:880px;font-size:11px;line-height:16px;color:#000;white-space:nowrap;left:1685.5px;width:400px;text-align:center;">0</div>
<div style="top:905px;font-size:11px;line-height:16px;color:#000;white-space:nowrap;left:1496.5px;width:400px;text-align:center;">0</div>
<div style="top:905px;font-size:11px;line-height:16px;color:#000;white-space:nowrap;left:1517.5px;width:400px;text-align:center;">0</div>
<div style="top:905px;font-size:11px;line-height:16px;color:#000;white-space:nowrap;left:1538.5px;width:400px;text-align:center;">0</div>
<div style="top:905px;font-size:11px;line-height:16px;color:#000;white-space:nowrap;left:1559.5px;width:400px;text-align:center;">0</div>
<div style="top:905px;font-size:11px;line-height:16px;color:#000;white-space:nowrap;left:1580.5px;width:400px;text-align:center;">0</div>
<div style="top:905px;font-size:11px;line-height:16px;color:#000;white-space:nowrap;left:1601.5px;width:400px;text-align:center;">0</div>
<div style="top:905px;font-size:11px;line-height:16px;color:#000;white-space:nowrap;left:1622.5px;width:400px;text-align:center;">0</div>
<div style="top:905px;font-size:11px;line-height:16px;color:#000;white-space:nowrap;left:1643.5px;width:400px;text-align:center;">0</div>
<div style="top:905px;font-size:11px;line-height:16px;color:#000;white-space:nowrap;left:1664.5px;width:400px;text-align:center;">0</div>
<div style="top:905px;font-size:11px;line-height:16px;color:#000;white-space:nowrap;left:1685.5px;width:400px;text-align:center;">0</div>
<div style="top:930px;font-size:11px;line-height:16px;color:#000;white-space:nowrap;left:1496.5px;width:400px;text-align:center;">0</div>
<div style="top:930px;font-size:11px;line-height:16px;color:#000;white-space:nowrap;left:1517.5px;width:400px;text-align:center;">0</div>
<div style="top:930px;font-size:11px;line-height:16px;color:#000;white-space:nowrap;left:1538.5px;width:400px;text-align:center;">0</div>
<div style="top:930px;font-size:11px;line-height:16px;color:#000;white-space:nowrap;left:1559.5px;width:400px;text-align:center;">0</div>
<div style="top:930px;font-size:11px;line-height:16px;color:#000;white-space:nowrap;left:1580.5px;width:400px;text-align:center;">0</div>
<div style="top:930px;font-size:11px;line-height:16px;color:#000;white-space:nowrap;left:1601.5px;width:400px;text-align:center;">0</div>
<div style="top:930px;font-size:11px;line-height:16px;color:#000;white-space:nowrap;left:1622.5px;width:400px;text-align:center;">0</div>
<div style="top:930px;font-size:11px;line-height:16px;color:#000;white-space:nowrap;left:1643.5px;width:400px;text-align:center;">0</div>
<div style="top:930px;font-size:11px;line-height:16px;color:#000;white-space:nowrap;left:1664.5px;width:400px;text-align:center;">0</div>
<div style="top:930px;font-size:11px;line-height:16px;color:#000;white-space:nowrap;left:1685.5px;width:400px;text-align:center;">0</div>
<div style="top:955px;font-size:11px;line-height:16px;color:#000;white-space:nowrap;left:1496.5px;width:400px;text-align:center;">0</div>
<div style="top:955px;font-size:11px;line-height:16px;color:#000;white-space:nowrap;left:1517.5px;width:400px;text-align:center;">0</div>
<div style="top:955px;font-size:11px;line-height:16px;color:#000;white-space:nowrap;left:1538.5px;width:400px;text-align:center;">0</div>
<div style="top:955px;font-size:11px;line-height:16px;color:#000;white-space:nowrap;left:1559.5px;width:400px;text-align:center;">0</div>
<div style="top:955px;font-size:11px;line-height:16px;color:#000;white-space:nowrap;left:1580.5px;width:400px;text-align:center;">0</div>
<div style="top:955px;font-size:11px;line-height:16px;color:#000;white-space:nowrap;left:1601.5px;width:400px;text-align:center;">0</div>
<div style="top:955px;font-size:11px;line-height:16px;color:#000;white-space:nowrap;left:1622.5px;width:400px;text-align:center;">0</div>
<div style="top:955px;font-size:11px;line-height:16px;color:#000;white-space:nowrap;left:1643.5px;width:400px;text-align:center;">0</div>
<div style="top:955px;font-size:11px;line-height:16px;color:#000;white-space:nowrap;left:1664.5px;width:400px;text-align:center;">0</div>
<div style="top:955px;font-size:11px;line-height:16px;color:#000;white-space:nowrap;left:1685.5px;width:400px;text-align:center;">0</div>
<div style="top:980px;font-size:11px;line-height:16px;color:#000;white-space:nowrap;left:1496.5px;width:400px;text-align:center;">0</div>
<div style="top:980px;font-size:11px;line-height:16px;color:#000;white-space:nowrap;left:1517.5px;width:400px;text-align:center;">0</div>
<div style="top:980px;font-size:11px;line-height:16px;color:#000;white-space:nowrap;left:1538.5px;width:400px;text-align:center;">0</div>
<div style="top:980px;font-size:11px;line-height:16px;color:#000;white-space:nowrap;left:1559.5px;width:400px;text-align:center;">0</div>
<div style="top:980px;font-size:11px;line-height:16px;color:#000;white-space:nowrap;left:1580.5px;width:400px;text-align:center;">0</div>
<div style="top:980px;font-size:11px;line-height:16px;color:#000;white-space:nowrap;left:1601.5px;width:400px;text-align:center;">0</div>
<div style="top:980px;font-size:11px;line-height:16px;color:#000;white-space:nowrap;left:1622.5px;width:400px;text-align:center;">0</div>
<div style="top:980px;font-size:11px;line-height:16px;color:#000;white-space:nowrap;left:1643.5px;width:400px;text-align:center;">0</div>
<div style="top:980px;font-size:11px;line-height:16px;color:#000;white-space:nowrap;left:1664.5px;width:400px;text-align:center;">0</div>
<div style="top:980px;font-size:11px;line-height:16px;color:#000;white-space:nowrap;left:1685.5px;width:400px;text-align:center;">0</div>
<svg style="left:216px;top:850px" width="1686" height="150"><defs><pattern id="sv" width="21" height="2" patternUnits="userSpaceOnUse"><rect x="0" y="0" width="1" height="1" fill="#7a7a7a"/></pattern><pattern id="sh" width="2" height="25" patternUnits="userSpaceOnUse"><rect x="0" y="0" width="1" height="1" fill="#7a7a7a"/></pattern></defs><rect x="0" y="0" width="1686" height="150" fill="url(#sv)"/><rect x="0" y="25" width="1686" height="125" fill="url(#sh)"/></svg>
<div style="left:1902px;top:321px;width:16px;height:679px;background:#f0f0f0;"></div>
<svg style="left:1904px;top:326px" width="11" height="7"><path d="M1 6 L5.5 1.5 L10 6" fill="none" stroke="#aaa" stroke-width="1.2"/></svg>
<svg style="left:1904px;top:987px" width="11" height="7"><path d="M1 1 L5.5 5.5 L10 1" fill="none" stroke="#aaa" stroke-width="1.2"/></svg>
<div style="left:3px;top:1002px;width:14px;height:14px;background:#e8e8e8;border:1px solid #c0c0c0;box-sizing:border-box;"></div>
<svg style="left:5px;top:1005px" width="10" height="8"><path d="M5 0 L1 4 L5 8Z M9 0 L5 4 L9 8Z" fill="#000"/></svg>
<svg style="left:23px;top:1004px" width="7" height="10"><path d="M6 1 L2 5 L6 9" fill="none" stroke="#333" stroke-width="1.3"/></svg>
<svg style="left:1873px;top:1004px" width="7" height="10"><path d="M1 1 L5 5 L1 9" fill="none" stroke="#333" stroke-width="1.3"/></svg>
<div style="left:1886px;top:1002px;width:14px;height:14px;background:#e8e8e8;border:1px solid #c0c0c0;box-sizing:border-box;"></div>
<svg style="left:1888px;top:1005px" width="10" height="8"><path d="M1 0 L5 4 L1 8Z M5 0 L9 4 L5 8Z" fill="#000"/></svg>
<div style="left:0px;top:1017px;width:1918px;height:1px;background:#b0b0b0;"></div>
<div style="left:2px;top:1021px;width:239px;height:17px;background:#008000;"></div>
<div style="top:1022px;font-size:11.875px;line-height:16px;color:#fff;white-space:nowrap;left:5px;">Verbindung zu Feondi erfolgreich hergestellt</div>
<div style="top:1022px;font-size:11.875px;line-height:16px;color:#000;white-space:nowrap;right:16px;">Verbindung zur Datenbank erfolgreich hergestellt</div>
<div style="left:0px;top:1040px;width:1918px;height:1px;background:#1a1a1a;"></div>
<div style="left:0px;top:321px;width:1px;height:696px;background:#a0a0a0;"></div>
<div style="left:75px;top:64px;width:279px;height:405px;background:#fcfcfc;border:1px solid #cfcfcf;box-sizing:border-box;"></div>
<div style="left:75px;top:166px;width:270px;height:19px;background:#dde8f8;"></div>
<div style="top:69px;font-size:11.8px;line-height:16px;color:#000;white-space:nowrap;left:108px;">Vorgaben</div>
<svg style="left:338px;top:73px" width="5" height="9"><path d="M0 0 L5 4.5 L0 9Z" fill="#000"/></svg>
<div style="left:106px;top:90px;width:248px;height:1px;background:#e2e2e2;"></div>
<div style="top:96px;font-size:11.8px;line-height:16px;color:#000;white-space:nowrap;left:108px;">Eigentümer, Partner</div>
<svg style="left:81px;top:96px" width="16" height="16" viewBox="0 0 16 16"><defs><linearGradient id="g9" x1="0" y1="0" x2="0" y2="1"><stop offset="0" stop-color="#d84040"/><stop offset="1" stop-color="#a01818"/></linearGradient></defs><path d="M0.8 15.2 C0.8 11.6 3 10.2 6.4 10.2 C9.8 10.2 12 11.6 12 15.2 Z" fill="url(#g9)" stroke="#6a0c0c" stroke-width="0.9"/><ellipse cx="6.4" cy="6.4" rx="2.9" ry="3.7" fill="#f3c9a0" stroke="#a0602e" stroke-width="0.7"/><path d="M3.2 6.2 C2.8 2.4 4.4 0.8 6.4 0.8 C8.4 0.8 10 2.4 9.6 6.2 C9 4.4 8.2 3.2 6.4 3.2 C4.6 3.2 3.8 4.4 3.2 6.2Z" fill="#8e4e22"/><circle cx="12" cy="9.4" r="2.9" fill="#f2c050" stroke="#b07818" stroke-width="0.8"/><circle cx="12.3" cy="9.1" r="0.9" fill="#b07818"/><path d="M10.2 11.4 L6.6 15.2 M8 13.8 L9.2 15" stroke="#e0a438" stroke-width="1.9" stroke-linecap="round"/></svg>
<div style="top:120px;font-size:11.8px;line-height:16px;color:#000;white-space:nowrap;left:108px;">Häuser</div>
<div style="top:144px;font-size:11.8px;line-height:16px;color:#000;white-space:nowrap;left:108px;">Objekte</div>
<svg style="left:81px;top:144px" width="16" height="16" viewBox="0 0 16 16"><path d="M3.6 8.2 V15.2 H12.4 V8.2 L8 4Z" fill="#f6f9ff" stroke="#6a7ed0" stroke-width="0.9"/><path d="M11 4.6 V2.4 H12.6 V6.2" fill="#f6f9ff" stroke="#6a7ed0" stroke-width="0.8"/><path d="M1.2 8.6 L8 2 L14.8 8.6" fill="none" stroke="#62b030" stroke-width="2.1" stroke-linejoin="round"/><rect x="6.5" y="10.2" width="3" height="5" fill="#e89030" stroke="#b06010" stroke-width="0.6"/></svg>
<div style="top:168px;font-size:11.8px;line-height:16px;color:#000;white-space:nowrap;left:108px;">Vertrieb über Internetportale</div>
<div style="top:192px;font-size:11.8px;line-height:16px;color:#000;white-space:nowrap;left:108px;">fewomatic</div>
<div style="top:216px;font-size:11.8px;line-height:16px;color:#000;white-space:nowrap;left:108px;">Objektsortierung (Internetseite)</div>
<div style="left:106px;top:238px;width:248px;height:1px;background:#e2e2e2;"></div>
<div style="top:244px;font-size:11.8px;line-height:16px;color:#000;white-space:nowrap;left:108px;">Aktionsangebote</div>
<div style="left:106px;top:264px;width:248px;height:1px;background:#e2e2e2;"></div>
<div style="top:270px;font-size:11.8px;line-height:16px;color:#000;white-space:nowrap;left:108px;">Lieferanten</div>
<div style="top:294px;font-size:11.8px;line-height:16px;color:#000;white-space:nowrap;left:108px;">Leistungen</div>
<div style="left:106px;top:315px;width:248px;height:1px;background:#e2e2e2;"></div>
<div style="top:321px;font-size:11.8px;line-height:16px;color:#000;white-space:nowrap;left:108px;">Reinigungs- und Servicepersonal/-firmen</div>
<svg style="left:81px;top:321px" width="16" height="16" viewBox="0 0 16 16"><path d="M1.5 15.3 C1.5 11.8 4 10.4 8 10.4 C12 10.4 14.5 11.8 14.5 15.3 Z" fill="#dfe6f0" stroke="#56688a" stroke-width="0.8"/><path d="M4 15.3 V11.4 H5.4 V13 H10.6 V11.4 H12 V15.3Z" fill="#2c58b0"/><ellipse cx="8" cy="6.8" rx="3" ry="3.6" fill="#f4cfa4" stroke="#a0602e" stroke-width="0.6"/><path d="M4.3 5.6 C4.3 2.2 6 1.2 8 1.2 C10 1.2 11.7 2.2 11.7 5.6 Z" fill="#f0c040" stroke="#a07a10" stroke-width="0.6"/><rect x="4" y="4.8" width="8" height="1.4" fill="#c89a20"/></svg>
<div style="top:345px;font-size:11.8px;line-height:16px;color:#000;white-space:nowrap;left:108px;">Reinigungs- und Serviceeinsatzplanung</div>
<div style="left:106px;top:366px;width:248px;height:1px;background:#e2e2e2;"></div>
<div style="top:372px;font-size:11.8px;line-height:16px;color:#000;white-space:nowrap;left:108px;">Interessenten</div>
<svg style="left:81px;top:372px" width="16" height="16" viewBox="0 0 16 16"><defs><linearGradient id="g11" x1="0" y1="0" x2="0" y2="1"><stop offset="0" stop-color="#9ad860"/><stop offset="1" stop-color="#4a9a20"/></linearGradient><radialGradient id="g11f" cx="0.45" cy="0.45" r="0.6"><stop offset="0" stop-color="#fff2e0"/><stop offset="1" stop-color="#e0a070"/></radialGradient></defs><path d="M1.2 15.2 C1.2 11.6 4 10.2 8 10.2 C12 10.2 14.8 11.6 14.8 15.2 Z" fill="url(#g11)" stroke="#2f6a10" stroke-width="0.9"/><ellipse cx="8" cy="6.6" rx="3.1" ry="3.9" fill="url(#g11f)" stroke="#a0602e" stroke-width="0.7"/><path d="M4.6 6.4 C4.2 2.6 5.8 1 8 1 C10.2 1 11.8 2.6 11.4 6.4 C10.8 4.6 10 3.4 8 3.4 C6 3.4 5.2 4.6 4.6 6.4Z" fill="#8e4e22"/></svg>
<div style="top:396px;font-size:11.8px;line-height:16px;color:#000;white-space:nowrap;left:108px;">Gastadressen</div>
<svg style="left:81px;top:396px" width="16" height="16" viewBox="0 0 16 16"><defs><linearGradient id="g12" x1="0" y1="0" x2="0" y2="1"><stop offset="0" stop-color="#ffb850"/><stop offset="1" stop-color="#e07810"/></linearGradient><radialGradient id="g12f" cx="0.45" cy="0.45" r="0.6"><stop offset="0" stop-color="#fff2e0"/><stop offset="1" stop-color="#e0a070"/></radialGradient></defs><path d="M1.2 15.2 C1.2 11.6 4 10.2 8 10.2 C12 10.2 14.8 11.6 14.8 15.2 Z" fill="url(#g12)" stroke="#a05008" stroke-width="0.9"/><ellipse cx="8" cy="6.6" rx="3.1" ry="3.9" fill="url(#g12f)" stroke="#a0602e" stroke-width="0.7"/><path d="M4.6 6.4 C4.2 2.6 5.8 1 8 1 C10.2 1 11.8 2.6 11.4 6.4 C10.8 4.6 10 3.4 8 3.4 C6 3.4 5.2 4.6 4.6 6.4Z" fill="#8e4e22"/></svg>
<div style="top:420px;font-size:11.8px;line-height:16px;color:#000;white-space:nowrap;left:108px;">Firmenadressen</div>
<svg style="left:81px;top:420px" width="16" height="16" viewBox="0 0 16 16"><defs><linearGradient id="g13" x1="0" y1="0" x2="0" y2="1"><stop offset="0" stop-color="#e04a4a"/><stop offset="1" stop-color="#b82020"/></linearGradient><radialGradient id="g13f" cx="0.45" cy="0.45" r="0.6"><stop offset="0" stop-color="#fff2e0"/><stop offset="1" stop-color="#e0a070"/></radialGradient></defs><path d="M1.2 15.2 C1.2 11.6 4 10.2 8 10.2 C12 10.2 14.8 11.6 14.8 15.2 Z" fill="url(#g13)" stroke="#700c0c" stroke-width="0.9"/><ellipse cx="8" cy="6.6" rx="3.1" ry="3.9" fill="url(#g13f)" stroke="#a0602e" stroke-width="0.7"/><path d="M4.6 6.4 C4.2 2.6 5.8 1 8 1 C10.2 1 11.8 2.6 11.4 6.4 C10.8 4.6 10 3.4 8 3.4 C6 3.4 5.2 4.6 4.6 6.4Z" fill="#9a5a2a"/><path d="M5.2 10.6 L8 13.2 L10.8 10.6" fill="#fff" stroke="#c0c0c0" stroke-width="0.5"/></svg>
<div style="left:106px;top:441px;width:248px;height:1px;background:#e2e2e2;"></div>
<div style="top:447px;font-size:11.8px;line-height:16px;color:#000;white-space:nowrap;left:108px;">Listen</div>
<svg style="left:338px;top:450px" width="5" height="9"><path d="M0 0 L5 4.5 L0 9Z" fill="#000"/></svg>
<svg style="left:81px;top:69px" width="16" height="16" viewBox="0 0 16 16"><rect x="0.5" y="0.5" width="13" height="11" fill="#f0f6fd" stroke="#7a9ad8" stroke-width="0.9"/><rect x="0.5" y="0.5" width="13" height="2.6" fill="#9ab8e8"/><path d="M0.5 6 H13.5 M4.8 0.5 V11.5 M9.2 0.5 V11.5" stroke="#9ab4e0" stroke-width="0.8"/><path d="M5.2 4.6 A3.4 3.4 0 1 0 9.4 8.6 L13.8 13.4 A1.2 1.2 0 0 0 15.2 12 L10.6 7.4 A3.4 3.4 0 0 0 6.8 3.4 L7.6 5.8 L6.4 7 Z" fill="#c8d4e8" stroke="#5a6e98" stroke-width="0.9" stroke-linejoin="round"/></svg>
<div style="left:225px;top:55px;width:20px;height:9px;border-radius:10px 10px 0 0;background:#f6b6b6"></div>
<div style="left:351px;top:150px;width:1335px;height:882px;background:#f8f9fc;"></div>
<div style="left:351px;top:150px;width:1335px;height:29px;background:#00b4c3;"></div>
<div style="left:351px;top:150px;width:1px;height:882px;background:#00b4c3;"></div>
<div style="left:1685px;top:150px;width:1px;height:882px;background:#00b4c3;"></div>
<div style="left:351px;top:1031px;width:1335px;height:1px;background:#00b4c3;"></div>
<div style="top:157px;font-size:11.875px;line-height:16px;color:#000;white-space:nowrap;left:360px;">Vertrieb über Internetportale</div>
<div style="left:1567px;top:164px;width:10px;height:1px;background:#7fd6df;"></div>
<svg style="left:1609px;top:158px" width="13" height="13"><rect x="0.5" y="0.5" width="11" height="11" fill="none" stroke="#000" stroke-width="1"/></svg>
<svg style="left:1655px;top:158px" width="13" height="13" viewBox="0 0 13 13"><path d="M0.5 0.5 L12 12 M12 0.5 L0.5 12" stroke="#000" stroke-width="1.1"/></svg>
<div style="left:352px;top:226px;width:1333px;height:764px;background:#f0f0f0;border:1px solid #a0a0a0;box-sizing:border-box;"></div>
<div style="left:354px;top:182px;width:87px;height:24px;background:#dcdcdc;border:1px solid #a4a4a4;box-sizing:border-box;"></div>
<div style="top:186px;font-size:10.375px;line-height:16px;color:#000;white-space:nowrap;left:359.5px;">Fewo-Line</div>
<div style="left:440px;top:182px;width:72px;height:24px;background:#dcdcdc;border:1px solid #a4a4a4;box-sizing:border-box;"></div>
<div style="top:186px;font-size:10.25px;line-height:16px;color:#000;white-space:nowrap;left:446px;">Google</div>
<div style="left:511px;top:182px;width:90px;height:24px;background:#dcdcdc;border:1px solid #a4a4a4;box-sizing:border-box;"></div>
<div style="top:185px;font-size:10.9375px;line-height:16px;color:#000;white-space:nowrap;left:517px;">grömitz.de</div>
<div style="left:600px;top:182px;width:68px;height:24px;background:#dcdcdc;border:1px solid #a4a4a4;box-sizing:border-box;"></div>
<div style="top:186px;font-size:10.3125px;line-height:16px;color:#000;white-space:nowrap;left:606px;">Holidu</div>
<div style="left:667px;top:182px;width:97px;height:24px;background:#dcdcdc;border:1px solid #a4a4a4;box-sizing:border-box;"></div>
<div style="top:186px;font-size:10.4375px;line-height:16px;color:#000;white-space:nowrap;left:672.5px;">ics-Kalender</div>
<div style="left:763px;top:182px;width:98px;height:24px;background:#dcdcdc;border:1px solid #a4a4a4;box-sizing:border-box;"></div>
<div style="top:185px;font-size:11.0px;line-height:16px;color:#000;white-space:nowrap;left:769px;">landreise.de</div>
<div style="left:860px;top:182px;width:93px;height:24px;background:#dcdcdc;border:1px solid #a4a4a4;box-sizing:border-box;"></div>
<div style="top:185px;font-size:10.6875px;line-height:16px;color:#000;white-space:nowrap;left:866px;">landsichten</div>
<div style="left:952px;top:182px;width:175px;height:24px;background:#dcdcdc;border:1px solid #a4a4a4;box-sizing:border-box;"></div>
<div style="top:185px;font-size:11.0px;line-height:16px;color:#000;white-space:nowrap;left:958px;">ostsee-ferienwohnungen.de</div>
<div style="left:1126px;top:182px;width:120px;height:24px;background:#dcdcdc;border:1px solid #a4a4a4;box-sizing:border-box;"></div>
<div style="top:185px;font-size:10.875px;line-height:16px;color:#000;white-space:nowrap;left:1132px;">ostsee-reisen.de</div>
<div style="left:1245px;top:182px;width:153px;height:24px;background:#dcdcdc;border:1px solid #a4a4a4;box-sizing:border-box;"></div>
<div style="top:185px;font-size:11.0px;line-height:16px;color:#000;white-space:nowrap;left:1251px;">ostsee-und-nordsee.de</div>
<div style="left:1397px;top:182px;width:73px;height:24px;background:#dcdcdc;border:1px solid #a4a4a4;box-sizing:border-box;"></div>
<div style="top:186px;font-size:10.25px;line-height:16px;color:#000;white-space:nowrap;left:1403px;">TOMAS</div>
<div style="left:1469px;top:182px;width:83px;height:24px;background:#dcdcdc;border:1px solid #a4a4a4;box-sizing:border-box;"></div>
<div style="top:185px;font-size:11.125px;line-height:16px;color:#000;white-space:nowrap;left:1476px;">Travanto</div>
<div style="left:1551px;top:182px;width:132px;height:24px;background:#dcdcdc;border:1px solid #a4a4a4;box-sizing:border-box;"></div>
<div style="top:186px;font-size:10.375px;line-height:16px;color:#000;white-space:nowrap;left:1557.5px;">Zusammenfassung</div>
<div style="left:428px;top:205px;width:154px;height:22px;background:#dcdcdc;border:1px solid #a4a4a4;box-sizing:border-box;"></div>
<div style="top:208px;font-size:10.5625px;line-height:16px;color:#000;white-space:nowrap;left:431px;">Feondi Buchungsstrecke</div>
<div style="left:581px;top:205px;width:168px;height:22px;background:#dcdcdc;border:1px solid #a4a4a4;box-sizing:border-box;"></div>
<div style="top:208px;font-size:10.625px;line-height:16px;color:#000;white-space:nowrap;left:587px;">Feondi Webseitenkalender</div>
<div style="left:748px;top:205px;width:82px;height:22px;background:#dcdcdc;border:1px solid #a4a4a4;box-sizing:border-box;"></div>
<div style="top:209px;font-size:10.4375px;line-height:16px;color:#000;white-space:nowrap;left:754px;">yoholida</div>
<div style="left:829px;top:205px;width:71px;height:22px;background:#dcdcdc;border:1px solid #a4a4a4;box-sizing:border-box;"></div>
<div style="top:208px;font-size:10.5625px;line-height:16px;color:#000;white-space:nowrap;left:834.5px;">Airbnb</div>
<div style="left:899px;top:205px;width:143px;height:22px;background:#dcdcdc;border:1px solid #a4a4a4;box-sizing:border-box;"></div>
<div style="top:208px;font-size:10.6875px;line-height:16px;color:#000;white-space:nowrap;left:905px;">acomodo (amrum.de)</div>
<div style="left:1041px;top:205px;width:80px;height:22px;background:#dcdcdc;border:1px solid #a4a4a4;box-sizing:border-box;"></div>
<div style="top:208px;font-size:11.25px;line-height:16px;color:#000;white-space:nowrap;left:1047px;">Atraveo</div>
<div style="left:1120px;top:205px;width:101px;height:22px;background:#dcdcdc;border:1px solid #a4a4a4;box-sizing:border-box;"></div>
<div style="top:208px;font-size:10.5625px;line-height:16px;color:#000;white-space:nowrap;left:1126px;">booking.com</div>
<div style="left:1220px;top:205px;width:137px;height:22px;background:#dcdcdc;border:1px solid #a4a4a4;box-sizing:border-box;"></div>
<div style="top:208px;font-size:10.75px;line-height:16px;color:#000;white-space:nowrap;left:1226px;">exklusiv-usedom.de</div>
<div style="left:1356px;top:205px;width:74px;height:22px;background:#dcdcdc;border:1px solid #a4a4a4;box-sizing:border-box;"></div>
<div style="top:208px;font-size:11.0px;line-height:16px;color:#000;white-space:nowrap;left:1361px;">Feratel</div>
<div style="left:1429px;top:205px;width:141px;height:22px;background:#dcdcdc;border:1px solid #a4a4a4;box-sizing:border-box;"></div>
<div style="top:208px;font-size:10.9375px;line-height:16px;color:#000;white-space:nowrap;left:1435.5px;">ferienwohnungen.de</div>
<div style="left:1569px;top:205px;width:114px;height:22px;background:#dcdcdc;border:1px solid #a4a4a4;box-sizing:border-box;"></div>
<div style="top:208px;font-size:11.1875px;line-height:16px;color:#000;white-space:nowrap;left:1576px;">fewo-direkt.de</div>
<div style="left:353px;top:203px;width:75px;height:24px;background:#f0f0f0;"></div>
<div style="top:209px;font-size:10.3125px;line-height:16px;color:#000;white-space:nowrap;left:359.5px;">Feondi</div>
<div style="top:241px;font-size:10.6875px;line-height:16px;color:#000;white-space:nowrap;left:397.5px;">Schnittstelle</div>
<div style="left:462px;top:239px;width:224px;height:20px;background:#fff;border:1px solid #a0a0a0;box-sizing:border-box;"></div>
<div style="left:463px;top:241px;width:206px;height:16px;border:1px dotted #000;box-sizing:border-box;"></div>
<div style="top:241px;font-size:11.0px;line-height:16px;color:#000;white-space:nowrap;left:465px;">ostseeklar</div>
<svg style="left:675px;top:248px" width="7" height="4"><path d="M0 0 H7 L3.5 4Z" fill="#666"/></svg>
<div style="left:692px;top:238px;width:28px;height:22px;background:#fff;border:1px solid #a0a0a0;box-sizing:border-box;"></div>
<svg style="left:698px;top:241px" width="16" height="16" viewBox="0 0 16 16"><rect x="0.8" y="1.5" width="12.6" height="10.6" rx="1" fill="#f4f8fd" stroke="#5a88d0" stroke-width="1"/><rect x="0.8" y="1.5" width="12.6" height="2.2" fill="#6a9ae0"/><path d="M2.6 6.2 H4.6 M2.6 8.8 H4.6" stroke="#3a70d0" stroke-width="1"/><rect x="6" y="5.4" width="6" height="5" fill="#fff" stroke="#b0b8c4" stroke-width="0.5"/><path d="M5.4 14.6 L13.4 6.6" stroke="#c07818" stroke-width="3.4" stroke-linecap="round"/><path d="M5.4 14.6 L13.4 6.6" stroke="#f8d848" stroke-width="2" stroke-linecap="round"/><path d="M4.6 15.4 L5.8 14.2" stroke="#5a3a10" stroke-width="1.4"/></svg>
<div style="left:356px;top:273px;width:1325px;height:185px;background:#f0f0f0;border:1px solid #c4c4c4;box-sizing:border-box;"></div>
<div style="top:280px;font-size:10.5px;line-height:16px;color:#6d6d6d;white-space:nowrap;left:414.4px;">Folgende Provision in die Preise einrechnen</div>
<div style="left:636px;top:278px;width:50px;height:20px;background:#f0f0f0;border:1px solid #a8a8a8;box-sizing:border-box;"></div>
<div style="top:280px;font-size:10.6px;line-height:16px;color:#6d6d6d;white-space:nowrap;right:1237px;">0,00</div>
<div style="left:405px;top:317px;width:899px;height:123px;border:1px solid #d4d4d4;box-sizing:border-box;"></div>
<div style="left:411px;top:310px;width:779px;height:14px;background:#f0f0f0;"></div>
<div style="top:309px;font-size:10.6875px;line-height:16px;color:#8e8e8e;white-space:nowrap;left:413px;">Buchungseinstellungen für Fewo-Verwalter. Diese werden nicht zum Portal gesendet! Stellen Sie hier die Bedingungen analog zu den Einstellungen beim Portal ein.</div>
<div style="top:338px;font-size:10.625px;line-height:16px;color:#6d6d6d;white-space:nowrap;left:419.5px;">Anzahlung und 1. Zahlung</div>
<div style="top:339px;font-size:10.75px;line-height:16px;color:#6d6d6d;white-space:nowrap;right:1302px;">Prozent</div>
<div style="left:635px;top:336px;width:80px;height:20px;background:#f0f0f0;border:1px solid #a8a8a8;box-sizing:border-box;"></div>
<div style="top:338px;font-size:10.6px;line-height:16px;color:#6d6d6d;white-space:nowrap;right:1207px;">0,00</div>
<div style="top:340px;font-size:10.625px;line-height:16px;color:#6d6d6d;white-space:nowrap;left:741px;">aus Betrag</div>
<div style="left:809px;top:337px;width:236px;height:20px;background:#f0f0f0;border:1px solid #a8a8a8;box-sizing:border-box;"></div>
<div style="top:339px;font-size:11.3125px;line-height:16px;color:#6d6d6d;white-space:nowrap;left:813px;">bitte wählen...</div>
<svg style="left:1033px;top:346px" width="7" height="4"><path d="M0 0 H7 L3.5 4Z" fill="#9a9a9a"/></svg>
<div style="top:362px;font-size:10.75px;line-height:16px;color:#6d6d6d;white-space:nowrap;right:1302px;">min. Betrag</div>
<div style="left:635px;top:360px;width:80px;height:20px;background:#f0f0f0;border:1px solid #a8a8a8;box-sizing:border-box;"></div>
<div style="top:362px;font-size:10.6px;line-height:16px;color:#6d6d6d;white-space:nowrap;right:1207px;">0,00 €</div>
<div style="left:809px;top:360px;width:58px;height:20px;background:#f0f0f0;border:1px solid #a8a8a8;box-sizing:border-box;"></div>
<div style="top:362px;font-size:10.6px;line-height:16px;color:#6d6d6d;white-space:nowrap;right:1070px;">0</div>
<svg style="left:855px;top:364px" width="7" height="12"><path d="M0.5 4 L3.5 1 L6.5 4Z M0.5 8 L3.5 11 L6.5 8Z" fill="#b4b4b4"/></svg>
<div style="left:872px;top:360px;width:173px;height:20px;background:#f0f0f0;border:1px solid #a8a8a8;box-sizing:border-box;"></div>
<div style="top:362px;font-size:11.3125px;line-height:16px;color:#6d6d6d;white-space:nowrap;left:876px;">bitte wählen...</div>
<svg style="left:1033px;top:369px" width="7" height="4"><path d="M0 0 H7 L3.5 4Z" fill="#9a9a9a"/></svg>
<div style="left:1054px;top:363px;width:14px;height:14px;background:#fff;border:1px solid #c8c8c8;box-sizing:border-box;"></div>
<div style="top:362px;font-size:10.5px;line-height:16px;color:#6d6d6d;white-space:nowrap;left:1072px;">Anzahlung ohne Nachkommastellen runden</div>
<div style="top:388px;font-size:10.8125px;line-height:16px;color:#6d6d6d;white-space:nowrap;right:1302px;">Restzahlung / 2. Zahlung</div>
<div style="left:635px;top:386px;width:57px;height:20px;background:#f0f0f0;border:1px solid #a8a8a8;box-sizing:border-box;"></div>
<div style="top:388px;font-size:10.6px;line-height:16px;color:#6d6d6d;white-space:nowrap;right:1244px;">0</div>
<svg style="left:680px;top:390px" width="7" height="12"><path d="M0.5 4 L3.5 1 L6.5 4Z M0.5 8 L3.5 11 L6.5 8Z" fill="#b4b4b4"/></svg>
<div style="left:699px;top:386px;width:168px;height:20px;background:#f0f0f0;border:1px solid #a8a8a8;box-sizing:border-box;"></div>
<div style="top:388px;font-size:11.3125px;line-height:16px;color:#6d6d6d;white-space:nowrap;left:703px;">bitte wählen...</div>
<svg style="left:855px;top:395px" width="7" height="4"><path d="M0 0 H7 L3.5 4Z" fill="#9a9a9a"/></svg>
<div style="top:414px;font-size:10.5625px;line-height:16px;color:#6d6d6d;white-space:nowrap;right:1302px;">Fremdbuchung</div>
<div style="left:635px;top:412px;width:410px;height:20px;background:#f0f0f0;border:1px solid #a8a8a8;box-sizing:border-box;"></div>
<div style="top:414px;font-size:11.125px;line-height:16px;color:#6d6d6d;white-space:nowrap;left:639px;">bitte wählen, wenn gewünscht...</div>
<svg style="left:1017px;top:421px" width="7" height="4"><path d="M0 0 H7 L3.5 4Z" fill="#9a9a9a"/></svg>
<svg style="left:1033px;top:418px" width="8" height="8" viewBox="0 0 8 8"><path d="M1 1 L7 7 M7 1 L1 7" stroke="#9a9a9a" stroke-width="1.1"/></svg>
<div style="left:1489px;top:432px;width:88px;height:21px;background:#f0f0f0;border:1px solid #cfcfcf;box-sizing:border-box;"></div>
<div style="top:435px;font-size:10.8125px;line-height:16px;color:#6d6d6d;white-space:nowrap;left:1517px;">abbrechen</div>
<div style="left:1584px;top:432px;width:90px;height:21px;background:#f0f0f0;border:1px solid #cfcfcf;box-sizing:border-box;"></div>
<div style="top:435px;font-size:10.625px;line-height:16px;color:#6d6d6d;white-space:nowrap;left:1614.5px;">speichern</div>
<svg style="left:1491px;top:434px" width="16" height="16" viewBox="0 0 16 16"><defs><radialGradient id="g14" cx="0.45" cy="0.35" r="0.7"><stop offset="0" stop-color="#d4d4d4"/><stop offset="1" stop-color="#8a8a8a"/></radialGradient></defs><circle cx="8" cy="8" r="7.4" fill="url(#g14)" stroke="#8a8a8a" stroke-width="0.8"/><path d="M5 5 L11 11 M11 5 L5 11" stroke="#eef2f6" stroke-width="2.6" stroke-linecap="round"/></svg>
<svg style="left:1588px;top:435px" width="14" height="14" viewBox="0 0 14 14"><rect x="0.5" y="0.5" width="13" height="13" rx="1" fill="#7a7a7a" stroke="#5a5a5a" stroke-width="0.8"/><rect x="3" y="0.8" width="8" height="4.6" fill="#e8eaee"/><rect x="8.6" y="1.6" width="1.4" height="2.8" fill="#7a7a7a"/><rect x="2.6" y="8" width="8.8" height="5.4" fill="#f4f6f8"/><rect x="2.6" y="11" width="8.8" height="2.4" fill="#c8c8c8"/></svg>
<div style="left:356px;top:464px;width:1325px;height:522px;background:#fff;border:1px solid #a0a0a0;box-sizing:border-box;"></div>
<div style="left:357px;top:465px;width:1323px;height:22px;background:#f0f0f0;"></div>
<div style="left:357px;top:487px;width:1323px;height:1px;background:#a0a0a0;"></div>
<div style="left:610px;top:465px;width:1px;height:22px;background:#c8c8c8;"></div>
<div style="left:712px;top:465px;width:1px;height:22px;background:#c8c8c8;"></div>
<div style="left:807px;top:465px;width:1px;height:22px;background:#c8c8c8;"></div>
<div style="left:1023px;top:465px;width:1px;height:22px;background:#c8c8c8;"></div>
<div style="left:1091px;top:465px;width:1px;height:22px;background:#c8c8c8;"></div>
<div style="left:1186px;top:465px;width:1px;height:22px;background:#c8c8c8;"></div>
<div style="left:1283px;top:465px;width:1px;height:22px;background:#c8c8c8;"></div>
<div style="left:1383px;top:465px;width:1px;height:22px;background:#c8c8c8;"></div>
<div style="left:1554px;top:465px;width:1px;height:22px;background:#c8c8c8;"></div>
<div style="top:468px;font-size:11.25px;line-height:16px;color:#767676;white-space:nowrap;left:360.5px;">Objekt</div>
<div style="top:468px;font-size:11.3125px;line-height:16px;color:#767676;white-space:nowrap;left:614.5px;">Kurztext</div>
<div style="top:469px;font-size:10.3125px;line-height:16px;color:#767676;white-space:nowrap;left:716px;">Hausname</div>
<div style="top:469px;font-size:10.4375px;line-height:16px;color:#767676;white-space:nowrap;left:811.5px;">Eigentümer Nachname</div>
<div style="top:468px;font-size:11.0625px;line-height:16px;color:#767676;white-space:nowrap;left:857px;width:400px;text-align:center;">aktiv</div>
<div style="top:468px;font-size:11.0px;line-height:16px;color:#767676;white-space:nowrap;left:1095.5px;">interne Nr.</div>
<div style="top:468px;font-size:10.875px;line-height:16px;color:#767676;white-space:nowrap;left:1190px;">O-Nr.</div>
<div style="top:468px;font-size:10.9375px;line-height:16px;color:#767676;white-space:nowrap;left:1131px;width:400px;text-align:center;">aktivieren</div>
<div style="top:468px;font-size:10.5px;line-height:16px;color:#767676;white-space:nowrap;left:1386px;">Schnittstelle ausschließen</div>
<div style="top:468px;font-size:10.9375px;line-height:16px;color:#767676;white-space:nowrap;left:1558.6px;">Schnittstellennr.</div>
<svg style="left:1663px;top:473px" width="11" height="6"><path d="M0 0 H11 L5.5 6Z" fill="#505050"/></svg>
<div style="left:357px;top:508px;width:1323px;height:1px;background:#d4d4d4;"></div>
<div style="left:357px;top:509px;width:1323px;height:20px;background:#d0d0d0;"></div>
<div style="left:1284px;top:509px;width:99px;height:20px;background:#fff;"></div>
<div style="left:357px;top:529px;width:1323px;height:1px;background:#d4d4d4;"></div>
<div style="left:610px;top:509px;width:1px;height:20px;background:#d4d4d4;"></div>
<div style="left:712px;top:509px;width:1px;height:20px;background:#d4d4d4;"></div>
<div style="left:807px;top:509px;width:1px;height:20px;background:#d4d4d4;"></div>
<div style="left:1023px;top:509px;width:1px;height:20px;background:#d4d4d4;"></div>
<div style="left:1091px;top:509px;width:1px;height:20px;background:#d4d4d4;"></div>
<div style="left:1186px;top:509px;width:1px;height:20px;background:#d4d4d4;"></div>
<div style="left:1283px;top:509px;width:1px;height:20px;background:#d4d4d4;"></div>
<div style="left:1383px;top:509px;width:1px;height:20px;background:#d4d4d4;"></div>
<div style="left:1554px;top:509px;width:1px;height:20px;background:#d4d4d4;"></div>
<div style="top:511px;font-size:10.6px;line-height:16px;color:#1e1e1e;white-space:nowrap;left:360.5px;">Wohnung B1</div>
<div style="top:511px;font-size:10.6px;line-height:16px;color:#1e1e1e;white-space:nowrap;left:614.5px;">Wohnung B1</div>
<div style="top:511px;font-size:10.6px;line-height:16px;color:#1e1e1e;white-space:nowrap;left:716px;">Haus 1</div>
<div style="top:511px;font-size:10.6px;line-height:16px;color:#1e1e1e;white-space:nowrap;left:811.5px;">Mustermann</div>
<div style="top:511px;font-size:10.6px;line-height:16px;color:#1e1e1e;white-space:nowrap;left:1097px;">7</div>
<div style="top:511px;font-size:10.6px;line-height:16px;color:#1e1e1e;white-space:nowrap;right:639px;">6</div>
<div style="left:1051px;top:512px;width:14px;height:14px;background:#fff;border:1px solid #9a9a9a;box-sizing:border-box;"></div>
<svg style="left:1053px;top:514px" width="10" height="10" viewBox="0 0 10 10"><path d="M1.5 5.2 L4 7.8 L8.8 2.2" fill="none" stroke="#7a7a7a" stroke-width="1.2"/></svg>
<div style="left:1325px;top:512px;width:14px;height:14px;background:#fff;border:1px solid #9a9a9a;box-sizing:border-box;"></div>
<div style="left:357px;top:530px;width:1323px;height:20px;background:#eef6fd;"></div>
<div style="left:357px;top:550px;width:1323px;height:1px;background:#d4d4d4;"></div>
<div style="left:610px;top:530px;width:1px;height:20px;background:#d4d4d4;"></div>
<div style="left:712px;top:530px;width:1px;height:20px;background:#d4d4d4;"></div>
<div style="left:807px;top:530px;width:1px;height:20px;background:#d4d4d4;"></div>
<div style="left:1023px;top:530px;width:1px;height:20px;background:#d4d4d4;"></div>
<div style="left:1091px;top:530px;width:1px;height:20px;background:#d4d4d4;"></div>
<div style="left:1186px;top:530px;width:1px;height:20px;background:#d4d4d4;"></div>
<div style="left:1283px;top:530px;width:1px;height:20px;background:#d4d4d4;"></div>
<div style="left:1383px;top:530px;width:1px;height:20px;background:#d4d4d4;"></div>
<div style="left:1554px;top:530px;width:1px;height:20px;background:#d4d4d4;"></div>
<div style="top:532px;font-size:10.6px;line-height:16px;color:#1e1e1e;white-space:nowrap;left:360.5px;">Wohnung B</div>
<div style="top:532px;font-size:10.6px;line-height:16px;color:#1e1e1e;white-space:nowrap;left:614.5px;">Wohnung B</div>
<div style="top:532px;font-size:10.6px;line-height:16px;color:#1e1e1e;white-space:nowrap;left:716px;">Haus 1</div>
<div style="top:532px;font-size:10.6px;line-height:16px;color:#1e1e1e;white-space:nowrap;left:811.5px;">Möbes</div>
<div style="top:532px;font-size:10.6px;line-height:16px;color:#1e1e1e;white-space:nowrap;left:1097px;">4</div>
<div style="top:532px;font-size:10.6px;line-height:16px;color:#1e1e1e;white-space:nowrap;right:639px;">4</div>
<div style="left:1051px;top:533px;width:14px;height:14px;background:#fff;border:1px solid #9a9a9a;box-sizing:border-box;"></div>
<svg style="left:1053px;top:535px" width="10" height="10" viewBox="0 0 10 10"><path d="M1.5 5.2 L4 7.8 L8.8 2.2" fill="none" stroke="#7a7a7a" stroke-width="1.2"/></svg>
<div style="left:1325px;top:533px;width:14px;height:14px;background:#fff;border:1px solid #9a9a9a;box-sizing:border-box;"></div>
<div style="left:357px;top:551px;width:1323px;height:20px;background:#fff;"></div>
<div style="left:357px;top:571px;width:1323px;height:1px;background:#d4d4d4;"></div>
<div style="left:610px;top:551px;width:1px;height:20px;background:#d4d4d4;"></div>
<div style="left:712px;top:551px;width:1px;height:20px;background:#d4d4d4;"></div>
<div style="left:807px;top:551px;width:1px;height:20px;background:#d4d4d4;"></div>
<div style="left:1023px;top:551px;width:1px;height:20px;background:#d4d4d4;"></div>
<div style="left:1091px;top:551px;width:1px;height:20px;background:#d4d4d4;"></div>
<div style="left:1186px;top:551px;width:1px;height:20px;background:#d4d4d4;"></div>
<div style="left:1283px;top:551px;width:1px;height:20px;background:#d4d4d4;"></div>
<div style="left:1383px;top:551px;width:1px;height:20px;background:#d4d4d4;"></div>
<div style="left:1554px;top:551px;width:1px;height:20px;background:#d4d4d4;"></div>
<div style="top:553px;font-size:10.6px;line-height:16px;color:#1e1e1e;white-space:nowrap;left:360.5px;">Wohnung A1</div>
<div style="top:553px;font-size:10.6px;line-height:16px;color:#1e1e1e;white-space:nowrap;left:614.5px;">Wohnung A1</div>
<div style="top:553px;font-size:10.6px;line-height:16px;color:#1e1e1e;white-space:nowrap;left:716px;">Haus 2</div>
<div style="top:553px;font-size:10.6px;line-height:16px;color:#1e1e1e;white-space:nowrap;left:811.5px;">Möbes</div>
<div style="top:553px;font-size:10.6px;line-height:16px;color:#1e1e1e;white-space:nowrap;left:1097px;">6</div>
<div style="top:553px;font-size:10.6px;line-height:16px;color:#1e1e1e;white-space:nowrap;right:639px;">7</div>
<div style="left:1051px;top:554px;width:14px;height:14px;background:#fff;border:1px solid #9a9a9a;box-sizing:border-box;"></div>
<svg style="left:1053px;top:556px" width="10" height="10" viewBox="0 0 10 10"><path d="M1.5 5.2 L4 7.8 L8.8 2.2" fill="none" stroke="#7a7a7a" stroke-width="1.2"/></svg>
<div style="left:1325px;top:554px;width:14px;height:14px;background:#fff;border:1px solid #9a9a9a;box-sizing:border-box;"></div>
<div style="left:357px;top:572px;width:1323px;height:20px;background:#eef6fd;"></div>
<div style="left:357px;top:592px;width:1323px;height:1px;background:#d4d4d4;"></div>
<div style="left:610px;top:572px;width:1px;height:20px;background:#d4d4d4;"></div>
<div style="left:712px;top:572px;width:1px;height:20px;background:#d4d4d4;"></div>
<div style="left:807px;top:572px;width:1px;height:20px;background:#d4d4d4;"></div>
<div style="left:1023px;top:572px;width:1px;height:20px;background:#d4d4d4;"></div>
<div style="left:1091px;top:572px;width:1px;height:20px;background:#d4d4d4;"></div>
<div style="left:1186px;top:572px;width:1px;height:20px;background:#d4d4d4;"></div>
<div style="left:1283px;top:572px;width:1px;height:20px;background:#d4d4d4;"></div>
<div style="left:1383px;top:572px;width:1px;height:20px;background:#d4d4d4;"></div>
<div style="left:1554px;top:572px;width:1px;height:20px;background:#d4d4d4;"></div>
<div style="top:574px;font-size:10.6px;line-height:16px;color:#1e1e1e;white-space:nowrap;left:360.5px;">Wohnung 3</div>
<div style="top:574px;font-size:10.6px;line-height:16px;color:#1e1e1e;white-space:nowrap;left:614.5px;">Wohnung 3</div>
<div style="top:574px;font-size:10.6px;line-height:16px;color:#1e1e1e;white-space:nowrap;left:716px;">Haus 2</div>
<div style="top:574px;font-size:10.6px;line-height:16px;color:#1e1e1e;white-space:nowrap;left:811.5px;">Möbes</div>
<div style="top:574px;font-size:10.6px;line-height:16px;color:#1e1e1e;white-space:nowrap;left:1097px;">3</div>
<div style="top:574px;font-size:10.6px;line-height:16px;color:#1e1e1e;white-space:nowrap;right:639px;">3</div>
<div style="left:1051px;top:575px;width:14px;height:14px;background:#fff;border:1px solid #9a9a9a;box-sizing:border-box;"></div>
<svg style="left:1053px;top:577px" width="10" height="10" viewBox="0 0 10 10"><path d="M1.5 5.2 L4 7.8 L8.8 2.2" fill="none" stroke="#7a7a7a" stroke-width="1.2"/></svg>
<div style="left:1325px;top:575px;width:14px;height:14px;background:#fff;border:1px solid #9a9a9a;box-sizing:border-box;"></div>
<div style="left:357px;top:593px;width:1323px;height:20px;background:#fff;"></div>
<div style="left:357px;top:613px;width:1323px;height:1px;background:#d4d4d4;"></div>
<div style="left:610px;top:593px;width:1px;height:20px;background:#d4d4d4;"></div>
<div style="left:712px;top:593px;width:1px;height:20px;background:#d4d4d4;"></div>
<div style="left:807px;top:593px;width:1px;height:20px;background:#d4d4d4;"></div>
<div style="left:1023px;top:593px;width:1px;height:20px;background:#d4d4d4;"></div>
<div style="left:1091px;top:593px;width:1px;height:20px;background:#d4d4d4;"></div>
<div style="left:1186px;top:593px;width:1px;height:20px;background:#d4d4d4;"></div>
<div style="left:1283px;top:593px;width:1px;height:20px;background:#d4d4d4;"></div>
<div style="left:1383px;top:593px;width:1px;height:20px;background:#d4d4d4;"></div>
<div style="left:1554px;top:593px;width:1px;height:20px;background:#d4d4d4;"></div>
<div style="top:595px;font-size:10.6px;line-height:16px;color:#1e1e1e;white-space:nowrap;left:360.5px;">Wohnung 1</div>
<div style="top:595px;font-size:10.6px;line-height:16px;color:#1e1e1e;white-space:nowrap;left:614.5px;">Wohnung 1</div>
<div style="top:595px;font-size:10.6px;line-height:16px;color:#1e1e1e;white-space:nowrap;left:716px;"></div>
<div style="top:595px;font-size:10.6px;line-height:16px;color:#1e1e1e;white-space:nowrap;left:811.5px;">Möbes</div>
<div style="top:595px;font-size:10.6px;line-height:16px;color:#1e1e1e;white-space:nowrap;left:1097px;">1</div>
<div style="top:595px;font-size:10.6px;line-height:16px;color:#1e1e1e;white-space:nowrap;right:639px;">1</div>
<div style="left:1051px;top:596px;width:14px;height:14px;background:#fff;border:1px solid #9a9a9a;box-sizing:border-box;"></div>
<svg style="left:1053px;top:598px" width="10" height="10" viewBox="0 0 10 10"><path d="M1.5 5.2 L4 7.8 L8.8 2.2" fill="none" stroke="#7a7a7a" stroke-width="1.2"/></svg>
<div style="left:1325px;top:596px;width:14px;height:14px;background:#fff;border:1px solid #9a9a9a;box-sizing:border-box;"></div>
<div style="left:357px;top:614px;width:1323px;height:20px;background:#eef6fd;"></div>
<div style="left:357px;top:634px;width:1323px;height:1px;background:#d4d4d4;"></div>
<div style="left:610px;top:614px;width:1px;height:20px;background:#d4d4d4;"></div>
<div style="left:712px;top:614px;width:1px;height:20px;background:#d4d4d4;"></div>
<div style="left:807px;top:614px;width:1px;height:20px;background:#d4d4d4;"></div>
<div style="left:1023px;top:614px;width:1px;height:20px;background:#d4d4d4;"></div>
<div style="left:1091px;top:614px;width:1px;height:20px;background:#d4d4d4;"></div>
<div style="left:1186px;top:614px;width:1px;height:20px;background:#d4d4d4;"></div>
<div style="left:1283px;top:614px;width:1px;height:20px;background:#d4d4d4;"></div>
<div style="left:1383px;top:614px;width:1px;height:20px;background:#d4d4d4;"></div>
<div style="left:1554px;top:614px;width:1px;height:20px;background:#d4d4d4;"></div>
<div style="top:616px;font-size:10.6px;line-height:16px;color:#1e1e1e;white-space:nowrap;left:360.5px;">Wohnung 1</div>
<div style="top:616px;font-size:10.6px;line-height:16px;color:#1e1e1e;white-space:nowrap;left:614.5px;">Wohnung 1</div>
<div style="top:616px;font-size:10.6px;line-height:16px;color:#1e1e1e;white-space:nowrap;left:716px;"></div>
<div style="top:616px;font-size:10.6px;line-height:16px;color:#1e1e1e;white-space:nowrap;left:811.5px;">Mustermann</div>
<div style="top:616px;font-size:10.6px;line-height:16px;color:#1e1e1e;white-space:nowrap;left:1097px;">1</div>
<div style="top:616px;font-size:10.6px;line-height:16px;color:#1e1e1e;white-space:nowrap;right:639px;">1</div>
<div style="left:1051px;top:617px;width:14px;height:14px;background:#fff;border:1px solid #9a9a9a;box-sizing:border-box;"></div>
<div style="left:1325px;top:617px;width:14px;height:14px;background:#fff;border:1px solid #9a9a9a;box-sizing:border-box;"></div>
<div style="left:357px;top:635px;width:1323px;height:20px;background:#fff;"></div>
<div style="left:357px;top:655px;width:1323px;height:1px;background:#d4d4d4;"></div>
<div style="left:610px;top:635px;width:1px;height:20px;background:#d4d4d4;"></div>
<div style="left:712px;top:635px;width:1px;height:20px;background:#d4d4d4;"></div>
<div style="left:807px;top:635px;width:1px;height:20px;background:#d4d4d4;"></div>
<div style="left:1023px;top:635px;width:1px;height:20px;background:#d4d4d4;"></div>
<div style="left:1091px;top:635px;width:1px;height:20px;background:#d4d4d4;"></div>
<div style="left:1186px;top:635px;width:1px;height:20px;background:#d4d4d4;"></div>
<div style="left:1283px;top:635px;width:1px;height:20px;background:#d4d4d4;"></div>
<div style="left:1383px;top:635px;width:1px;height:20px;background:#d4d4d4;"></div>
<div style="left:1554px;top:635px;width:1px;height:20px;background:#d4d4d4;"></div>
<div style="top:637px;font-size:10.6px;line-height:16px;color:#1e1e1e;white-space:nowrap;left:360.5px;">Testhaus</div>
<div style="top:637px;font-size:10.6px;line-height:16px;color:#1e1e1e;white-space:nowrap;left:614.5px;">Testhaus</div>
<div style="top:637px;font-size:10.6px;line-height:16px;color:#1e1e1e;white-space:nowrap;left:716px;"></div>
<div style="top:637px;font-size:10.6px;line-height:16px;color:#1e1e1e;white-space:nowrap;left:811.5px;">Bischoff</div>
<div style="top:637px;font-size:10.6px;line-height:16px;color:#1e1e1e;white-space:nowrap;left:1097px;"></div>
<div style="top:637px;font-size:10.6px;line-height:16px;color:#1e1e1e;white-space:nowrap;right:639px;">9</div>
<div style="left:1051px;top:638px;width:14px;height:14px;background:#fff;border:1px solid #9a9a9a;box-sizing:border-box;"></div>
<svg style="left:1053px;top:640px" width="10" height="10" viewBox="0 0 10 10"><path d="M1.5 5.2 L4 7.8 L8.8 2.2" fill="none" stroke="#7a7a7a" stroke-width="1.2"/></svg>
<div style="left:1325px;top:638px;width:14px;height:14px;background:#fff;border:1px solid #9a9a9a;box-sizing:border-box;"></div>
<div style="left:357px;top:656px;width:1323px;height:20px;background:#eef6fd;"></div>
<div style="left:357px;top:676px;width:1323px;height:1px;background:#d4d4d4;"></div>
<div style="left:610px;top:656px;width:1px;height:20px;background:#d4d4d4;"></div>
<div style="left:712px;top:656px;width:1px;height:20px;background:#d4d4d4;"></div>
<div style="left:807px;top:656px;width:1px;height:20px;background:#d4d4d4;"></div>
<div style="left:1023px;top:656px;width:1px;height:20px;background:#d4d4d4;"></div>
<div style="left:1091px;top:656px;width:1px;height:20px;background:#d4d4d4;"></div>
<div style="left:1186px;top:656px;width:1px;height:20px;background:#d4d4d4;"></div>
<div style="left:1283px;top:656px;width:1px;height:20px;background:#d4d4d4;"></div>
<div style="left:1383px;top:656px;width:1px;height:20px;background:#d4d4d4;"></div>
<div style="left:1554px;top:656px;width:1px;height:20px;background:#d4d4d4;"></div>
<div style="top:658px;font-size:10.6px;line-height:16px;color:#1e1e1e;white-space:nowrap;left:360.5px;">Haus C</div>
<div style="top:658px;font-size:10.6px;line-height:16px;color:#1e1e1e;white-space:nowrap;left:614.5px;">Haus C</div>
<div style="top:658px;font-size:10.6px;line-height:16px;color:#1e1e1e;white-space:nowrap;left:716px;">Haus 1</div>
<div style="top:658px;font-size:10.6px;line-height:16px;color:#1e1e1e;white-space:nowrap;left:811.5px;">Mustermann</div>
<div style="top:658px;font-size:10.6px;line-height:16px;color:#1e1e1e;white-space:nowrap;left:1097px;">5</div>
<div style="top:658px;font-size:10.6px;line-height:16px;color:#1e1e1e;white-space:nowrap;right:639px;">5</div>
<div style="left:1051px;top:659px;width:14px;height:14px;background:#fff;border:1px solid #9a9a9a;box-sizing:border-box;"></div>
<svg style="left:1053px;top:661px" width="10" height="10" viewBox="0 0 10 10"><path d="M1.5 5.2 L4 7.8 L8.8 2.2" fill="none" stroke="#7a7a7a" stroke-width="1.2"/></svg>
<div style="left:1325px;top:659px;width:14px;height:14px;background:#fff;border:1px solid #9a9a9a;box-sizing:border-box;"></div>
<div style="left:357px;top:677px;width:1323px;height:20px;background:#fff;"></div>
<div style="left:357px;top:697px;width:1323px;height:1px;background:#d4d4d4;"></div>
<div style="left:610px;top:677px;width:1px;height:20px;background:#d4d4d4;"></div>
<div style="left:712px;top:677px;width:1px;height:20px;background:#d4d4d4;"></div>
<div style="left:807px;top:677px;width:1px;height:20px;background:#d4d4d4;"></div>
<div style="left:1023px;top:677px;width:1px;height:20px;background:#d4d4d4;"></div>
<div style="left:1091px;top:677px;width:1px;height:20px;background:#d4d4d4;"></div>
<div style="left:1186px;top:677px;width:1px;height:20px;background:#d4d4d4;"></div>
<div style="left:1283px;top:677px;width:1px;height:20px;background:#d4d4d4;"></div>
<div style="left:1383px;top:677px;width:1px;height:20px;background:#d4d4d4;"></div>
<div style="left:1554px;top:677px;width:1px;height:20px;background:#d4d4d4;"></div>
<div style="top:679px;font-size:10.6px;line-height:16px;color:#1e1e1e;white-space:nowrap;left:360.5px;">Haus A</div>
<div style="top:679px;font-size:10.6px;line-height:16px;color:#1e1e1e;white-space:nowrap;left:614.5px;">Haus A</div>
<div style="top:679px;font-size:10.6px;line-height:16px;color:#1e1e1e;white-space:nowrap;left:716px;">Haus 1</div>
<div style="top:679px;font-size:10.6px;line-height:16px;color:#1e1e1e;white-space:nowrap;left:811.5px;">Bischoff</div>
<div style="top:679px;font-size:10.6px;line-height:16px;color:#1e1e1e;white-space:nowrap;left:1097px;">2</div>
<div style="top:679px;font-size:10.6px;line-height:16px;color:#1e1e1e;white-space:nowrap;right:639px;">2</div>
<div style="left:1051px;top:680px;width:14px;height:14px;background:#fff;border:1px solid #9a9a9a;box-sizing:border-box;"></div>
<svg style="left:1053px;top:682px" width="10" height="10" viewBox="0 0 10 10"><path d="M1.5 5.2 L4 7.8 L8.8 2.2" fill="none" stroke="#7a7a7a" stroke-width="1.2"/></svg>
<div style="left:1325px;top:680px;width:14px;height:14px;background:#fff;border:1px solid #9a9a9a;box-sizing:border-box;"></div>
<div style="left:357px;top:698px;width:1323px;height:20px;background:#eef6fd;"></div>
<div style="left:357px;top:718px;width:1323px;height:1px;background:#d4d4d4;"></div>
<div style="left:610px;top:698px;width:1px;height:20px;background:#d4d4d4;"></div>
<div style="left:712px;top:698px;width:1px;height:20px;background:#d4d4d4;"></div>
<div style="left:807px;top:698px;width:1px;height:20px;background:#d4d4d4;"></div>
<div style="left:1023px;top:698px;width:1px;height:20px;background:#d4d4d4;"></div>
<div style="left:1091px;top:698px;width:1px;height:20px;background:#d4d4d4;"></div>
<div style="left:1186px;top:698px;width:1px;height:20px;background:#d4d4d4;"></div>
<div style="left:1283px;top:698px;width:1px;height:20px;background:#d4d4d4;"></div>
<div style="left:1383px;top:698px;width:1px;height:20px;background:#d4d4d4;"></div>
<div style="left:1554px;top:698px;width:1px;height:20px;background:#d4d4d4;"></div>
<div style="top:700px;font-size:10.6px;line-height:16px;color:#1e1e1e;white-space:nowrap;left:360.5px;">Altbau Stadtvilla Dresden Striesen</div>
<div style="top:700px;font-size:10.6px;line-height:16px;color:#1e1e1e;white-space:nowrap;left:614.5px;">Stadtvilla Dresde...</div>
<div style="top:700px;font-size:10.6px;line-height:16px;color:#1e1e1e;white-space:nowrap;left:716px;"></div>
<div style="top:700px;font-size:10.6px;line-height:16px;color:#1e1e1e;white-space:nowrap;left:811.5px;">Bischoff</div>
<div style="top:700px;font-size:10.6px;line-height:16px;color:#1e1e1e;white-space:nowrap;left:1097px;"></div>
<div style="top:700px;font-size:10.6px;line-height:16px;color:#1e1e1e;white-space:nowrap;right:639px;">8</div>
<div style="left:1051px;top:701px;width:14px;height:14px;background:#fff;border:1px solid #9a9a9a;box-sizing:border-box;"></div>
<svg style="left:1053px;top:703px" width="10" height="10" viewBox="0 0 10 10"><path d="M1.5 5.2 L4 7.8 L8.8 2.2" fill="none" stroke="#7a7a7a" stroke-width="1.2"/></svg>
<div style="left:1325px;top:701px;width:14px;height:14px;background:#fff;border:1px solid #9a9a9a;box-sizing:border-box;"></div>
<div style="left:357px;top:948px;width:1323px;height:37px;background:#f0f0f0;"></div>
<div style="left:357px;top:948px;width:1323px;height:1px;background:#c0c0c0;"></div>
<div style="left:1283px;top:955px;width:98px;height:24px;background:#fff;border:1px solid #cfcfcf;box-sizing:border-box;"></div>
<div style="top:959px;font-size:10.6px;line-height:16px;color:#1e1e1e;white-space:nowrap;right:541px;">0</div>
<div style="left:1494px;top:1001px;width:90px;height:22px;background:#fff;border:1px solid #a8a8a8;box-sizing:border-box;"></div>
<div style="top:1004px;font-size:10.9375px;line-height:16px;color:#000;white-space:nowrap;left:1522px;">abbrechen</div>
<div style="left:1590px;top:1001px;width:90px;height:22px;background:#fff;border:1px solid #a8a8a8;box-sizing:border-box;"></div>
<div style="top:1004px;font-size:10.625px;line-height:16px;color:#000;white-space:nowrap;left:1620px;">speichern</div>
<svg style="left:1497px;top:1004px" width="16" height="16" viewBox="0 0 16 16"><defs><radialGradient id="g15" cx="0.45" cy="0.35" r="0.7"><stop offset="0" stop-color="#f08080"/><stop offset="1" stop-color="#c81818"/></radialGradient></defs><circle cx="8" cy="8" r="7.4" fill="url(#g15)" stroke="#a01010" stroke-width="0.8"/><path d="M5 5 L11 11 M11 5 L5 11" stroke="#eef2f6" stroke-width="2.6" stroke-linecap="round"/></svg>
<svg style="left:1594px;top:1005px" width="14" height="14" viewBox="0 0 14 14"><rect x="0.5" y="0.5" width="13" height="13" rx="1" fill="#3a4a68" stroke="#1e2a40" stroke-width="0.8"/><rect x="3" y="0.8" width="8" height="4.6" fill="#e8eaee"/><rect x="8.6" y="1.6" width="1.4" height="2.8" fill="#3a4a68"/><rect x="2.6" y="8" width="8.8" height="5.4" fill="#f4f6f8"/><rect x="2.6" y="11" width="8.8" height="2.4" fill="#5a9ae0"/></svg>
<div style="left:74px;top:20px;width:86px;height:44px;border:5px solid #ff0080;box-sizing:border-box;"></div>
<div style="left:70px;top:161px;width:280px;height:29px;border:5px solid #ff0080;box-sizing:border-box;"></div>
<div style="left:352px;top:201px;width:76px;height:26px;border:5px solid #ff0080;box-sizing:border-box;"></div>
<div style="left:377px;top:224px;width:353px;height:45px;border:5px solid #ff0080;box-sizing:border-box;"></div>
<div style="left:1278px;top:460px;width:108px;height:269px;border:5px solid #ff0080;box-sizing:border-box;"></div>
</body></html>
